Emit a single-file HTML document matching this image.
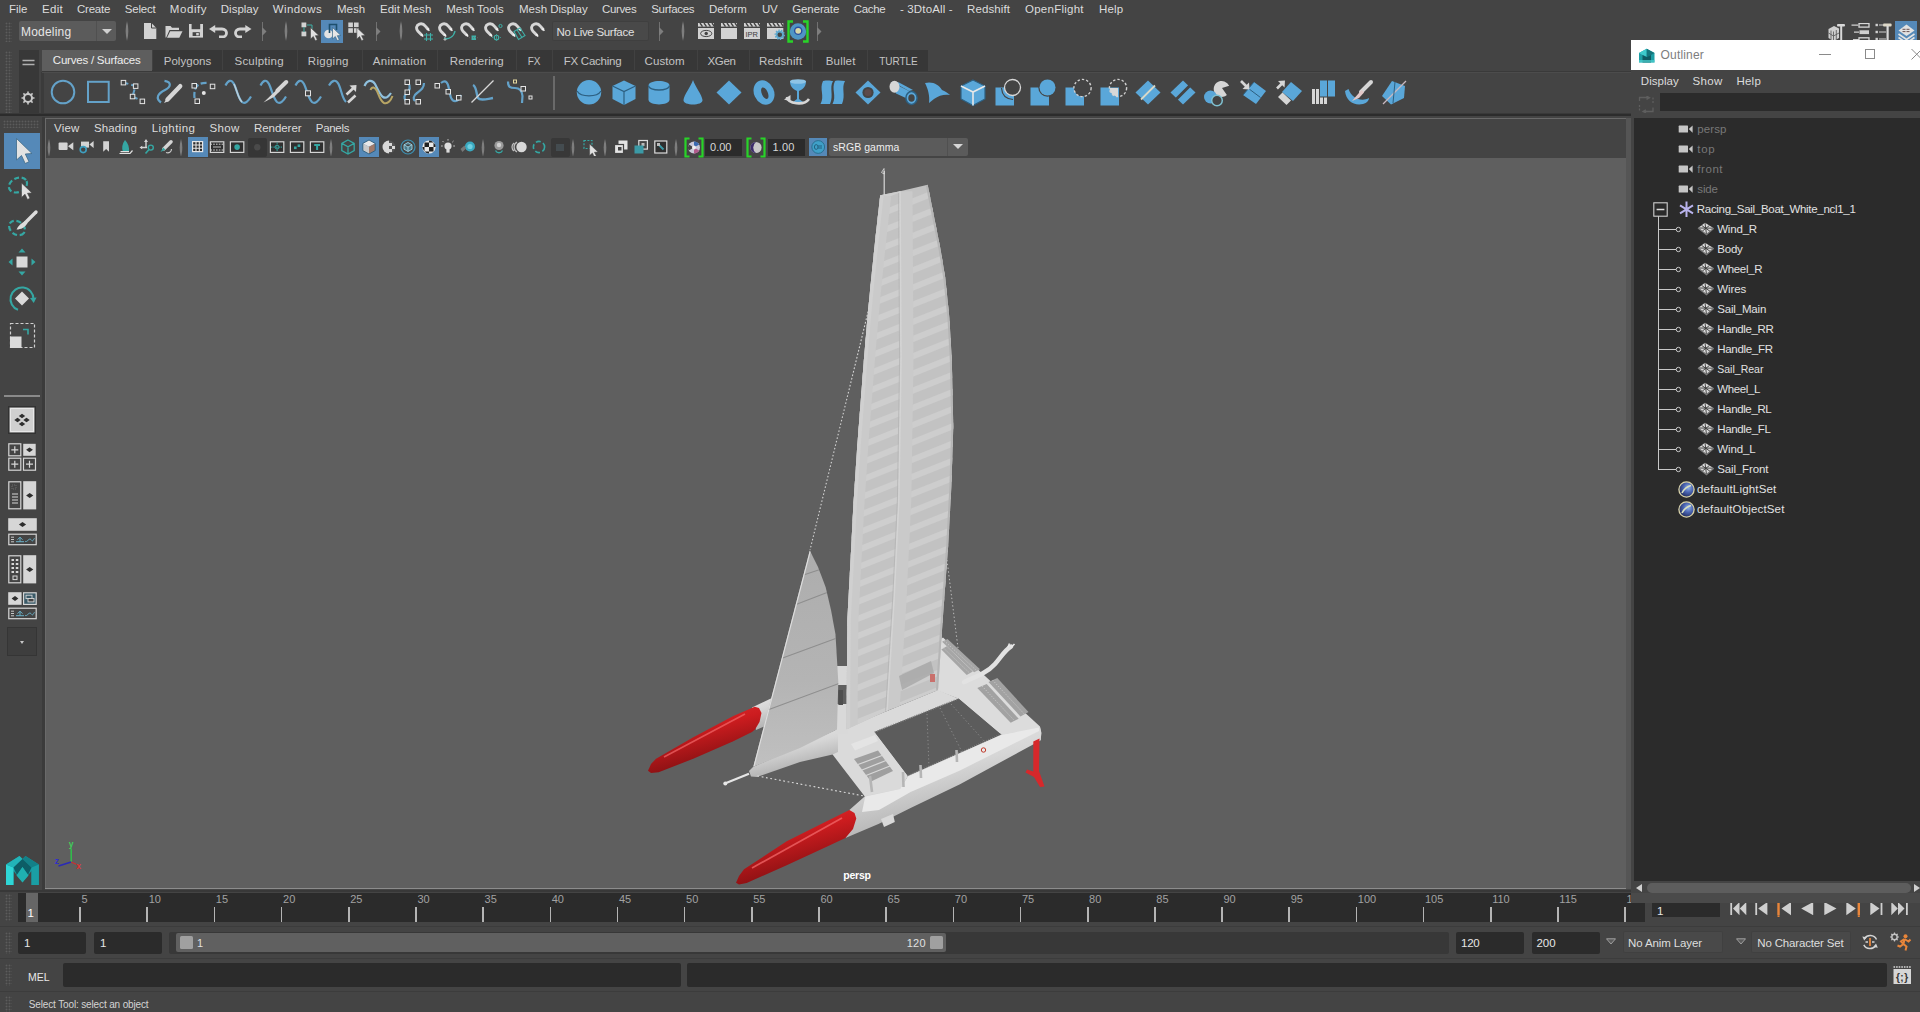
<!DOCTYPE html>
<html lang="en"><head><meta charset="utf-8"><title>Autodesk Maya</title>
<style>
html,body{margin:0;padding:0;}
body{width:1920px;height:1012px;overflow:hidden;background:#444444;position:relative;font-family:"Liberation Sans", sans-serif;}
body>div,body>span,body>svg{position:absolute;}
body>span{white-space:pre;line-height:16px;}
</style></head><body>
<span style="left:9px;top:0.52px;font-size:11.5px;color:#dcdcdc;letter-spacing:-0.083px;">File</span>
<span style="left:42px;top:0.52px;font-size:11.5px;color:#dcdcdc;letter-spacing:0.293px;">Edit</span>
<span style="left:77px;top:0.52px;font-size:11.5px;color:#dcdcdc;letter-spacing:-0.222px;">Create</span>
<span style="left:124.8px;top:0.52px;font-size:11.5px;color:#dcdcdc;letter-spacing:-0.211px;">Select</span>
<span style="left:169.8px;top:0.52px;font-size:11.5px;color:#dcdcdc;letter-spacing:0.587px;">Modify</span>
<span style="left:220.8px;top:0.52px;font-size:11.5px;color:#dcdcdc;letter-spacing:-0.003px;">Display</span>
<span style="left:272.8px;top:0.52px;font-size:11.5px;color:#dcdcdc;letter-spacing:0.392px;">Windows</span>
<span style="left:337px;top:0.52px;font-size:11.5px;color:#dcdcdc;letter-spacing:0.019px;">Mesh</span>
<span style="left:380px;top:0.52px;font-size:11.5px;color:#dcdcdc;letter-spacing:0.018px;">Edit Mesh</span>
<span style="left:446.2px;top:0.52px;font-size:11.5px;color:#dcdcdc;letter-spacing:-0.037px;">Mesh Tools</span>
<span style="left:519px;top:0.52px;font-size:11.5px;color:#dcdcdc;letter-spacing:-0.028px;">Mesh Display</span>
<span style="left:602px;top:0.52px;font-size:11.5px;color:#dcdcdc;letter-spacing:-0.356px;">Curves</span>
<span style="left:651.2px;top:0.52px;font-size:11.5px;color:#dcdcdc;letter-spacing:-0.286px;">Surfaces</span>
<span style="left:709px;top:0.52px;font-size:11.5px;color:#dcdcdc;letter-spacing:0.016px;">Deform</span>
<span style="left:762px;top:0.52px;font-size:11.5px;color:#dcdcdc;letter-spacing:-0.392px;">UV</span>
<span style="left:792.3px;top:0.52px;font-size:11.5px;color:#dcdcdc;letter-spacing:-0.132px;">Generate</span>
<span style="left:853.7px;top:0.52px;font-size:11.5px;color:#dcdcdc;letter-spacing:-0.290px;">Cache</span>
<span style="left:900px;top:0.52px;font-size:11.5px;color:#dcdcdc;letter-spacing:0.143px;">- 3DtoAll -</span>
<span style="left:967px;top:0.52px;font-size:11.5px;color:#dcdcdc;letter-spacing:0.102px;">Redshift</span>
<span style="left:1025px;top:0.52px;font-size:11.5px;color:#dcdcdc;letter-spacing:0.253px;">OpenFlight</span>
<span style="left:1099px;top:0.52px;font-size:11.5px;color:#dcdcdc;letter-spacing:0.161px;">Help</span>
<div style="left:5px;top:22px;width:7px;height:20px;background-image:radial-gradient(circle,#5c5c5c 0.8px,transparent 1.1px);background-size:3px 3px;"></div>
<div style="left:18.5px;top:21px;width:97px;height:19.5px;background:#5b5b5b;border-radius:2px;"></div>
<div style="left:96px;top:21px;width:1px;height:19.5px;background:#505050;"></div>
<span style="left:21px;top:23.84px;font-size:12px;color:#e6e6e6;letter-spacing:0.200px;">Modeling</span>
<div style="left:102px;top:29px;width:0;height:0;border-left:5px solid transparent;border-right:5px solid transparent;border-top:5px solid #d0d0d0;"></div>
<div style="left:551.5px;top:21px;width:97px;height:20px;background:#494949;border-radius:2px;box-shadow:inset 0 0 0 1px #3f3f3f;"></div>
<span style="left:556.5px;top:24.02px;font-size:11.5px;color:#e0e0e0;letter-spacing:-0.289px;">No Live Surface</span>
<div style="left:5px;top:51px;width:7px;height:62px;background-image:radial-gradient(circle,#5c5c5c 0.8px,transparent 1.1px);background-size:3px 3px;"></div>
<div style="left:18.5px;top:49.5px;width:20.3px;height:64px;background:#383838;"></div>
<div style="left:41.3px;top:72px;width:3px;height:41px;background:#3b3b3b;"></div>
<div style="left:42px;top:49.5px;width:885.5px;height:21px;background:#373737;"></div>
<div style="left:41.5px;top:49.5px;width:110.5px;height:21.5px;background:#5e5e5e;"></div>
<div style="left:152px;top:50px;width:1px;height:20px;background:#414141;"></div>
<div style="left:222px;top:50px;width:1px;height:20px;background:#414141;"></div>
<div style="left:297px;top:50px;width:1px;height:20px;background:#414141;"></div>
<div style="left:362px;top:50px;width:1px;height:20px;background:#414141;"></div>
<div style="left:437px;top:50px;width:1px;height:20px;background:#414141;"></div>
<div style="left:516px;top:50px;width:1px;height:20px;background:#414141;"></div>
<div style="left:552px;top:50px;width:1px;height:20px;background:#414141;"></div>
<div style="left:634px;top:50px;width:1px;height:20px;background:#414141;"></div>
<div style="left:697px;top:50px;width:1px;height:20px;background:#414141;"></div>
<div style="left:749px;top:50px;width:1px;height:20px;background:#414141;"></div>
<div style="left:812px;top:50px;width:1px;height:20px;background:#414141;"></div>
<div style="left:867px;top:50px;width:1px;height:20px;background:#414141;"></div>
<span style="left:52.8px;top:52.02px;font-size:11.5px;color:#eeeeee;letter-spacing:-0.218px;">Curves / Surfaces</span>
<span style="left:163.7px;top:53.02px;font-size:11.5px;color:#c4c4c4;letter-spacing:0.036px;">Polygons</span>
<span style="left:234.5px;top:53.02px;font-size:11.5px;color:#c4c4c4;letter-spacing:0.221px;">Sculpting</span>
<span style="left:307.8px;top:53.02px;font-size:11.5px;color:#c4c4c4;letter-spacing:0.286px;">Rigging</span>
<span style="left:372.8px;top:53.02px;font-size:11.5px;color:#c4c4c4;letter-spacing:0.262px;">Animation</span>
<span style="left:449.8px;top:53.02px;font-size:11.5px;color:#c4c4c4;letter-spacing:0.102px;">Rendering</span>
<span style="left:527.8px;top:53.53px;font-size:10px;color:#c4c4c4;letter-spacing:-0.041px;">FX</span>
<span style="left:563.7px;top:53.02px;font-size:11.5px;color:#c4c4c4;letter-spacing:-0.249px;">FX Caching</span>
<span style="left:644.5px;top:53.02px;font-size:11.5px;color:#c4c4c4;letter-spacing:0.096px;">Custom</span>
<span style="left:707.5px;top:53.02px;font-size:11.5px;color:#c4c4c4;letter-spacing:-0.355px;">XGen</span>
<span style="left:759px;top:53.02px;font-size:11.5px;color:#c4c4c4;letter-spacing:0.127px;">Redshift</span>
<span style="left:825.8px;top:53.02px;font-size:11.5px;color:#c4c4c4;letter-spacing:0.153px;">Bullet</span>
<span style="left:879.2px;top:53.53px;font-size:10px;color:#c4c4c4;letter-spacing:-0.036px;">TURTLE</span>
<div style="left:42px;top:70.5px;width:1589px;height:1px;background:#3a3a3a;"></div>
<div style="left:42px;top:71.5px;width:1589px;height:1px;background:#4c4c4c;"></div>
<div style="left:0px;top:112.8px;width:1631px;height:3.4px;background:#393939;"></div>
<div style="left:0px;top:113.8px;width:1631px;height:2px;background:#2c2c2c;"></div>
<div style="left:3px;top:120px;width:36px;height:8px;background-image:radial-gradient(circle,#5c5c5c 0.8px,transparent 1.1px);background-size:3px 3px;"></div>
<div style="left:4px;top:132.8px;width:36px;height:36px;background:#5589b8;"></div>
<div style="left:4px;top:395px;width:36px;height:1.5px;background:#8a8a8a;"></div>
<div style="left:41.5px;top:116.5px;width:3px;height:773px;background:#3b3b3b;"></div>
<div style="left:44.7px;top:117.8px;width:1586.3px;height:771.2px;background:#6a6a6a;"></div>
<div style="left:45.9px;top:119.2px;width:1585.1px;height:39px;background:#444444;"></div>
<div style="left:46px;top:158px;width:1579.5px;height:730px;background:#5f5f5f;"></div>
<div style="left:1625.5px;top:118px;width:5.5px;height:771px;background:#555555;"></div>
<div style="left:45px;top:888px;width:1581px;height:1.2px;background:#8c8c8c;"></div>
<span style="left:54px;top:119.72px;font-size:11.5px;color:#dcdcdc;letter-spacing:0.195px;">View</span>
<span style="left:94px;top:119.72px;font-size:11.5px;color:#dcdcdc;letter-spacing:0.112px;">Shading</span>
<span style="left:151.8px;top:119.72px;font-size:11.5px;color:#dcdcdc;letter-spacing:0.400px;">Lighting</span>
<span style="left:209.5px;top:119.72px;font-size:11.5px;color:#dcdcdc;letter-spacing:0.305px;">Show</span>
<span style="left:254px;top:119.72px;font-size:11.5px;color:#dcdcdc;letter-spacing:-0.057px;">Renderer</span>
<span style="left:315.8px;top:119.72px;font-size:11.5px;color:#dcdcdc;letter-spacing:-0.295px;">Panels</span>
<div style="left:705px;top:138.5px;width:37px;height:17px;background:#2b2b2b;"></div>
<span style="left:710px;top:139.49px;font-size:11px;color:#d8d8d8;letter-spacing:0.020px;">0.00</span>
<div style="left:768px;top:138.5px;width:37px;height:17px;background:#2b2b2b;"></div>
<span style="left:772.5px;top:139.49px;font-size:11px;color:#d8d8d8;letter-spacing:0.145px;">1.00</span>
<div style="left:808.5px;top:138px;width:18.5px;height:18px;background:#5589b8;"></div>
<div style="left:829px;top:138px;width:139px;height:17.5px;background:#5b5b5b;border-radius:2px;"></div>
<div style="left:947px;top:138px;width:1px;height:17.5px;background:#505050;"></div>
<span style="left:833px;top:139.36px;font-size:10.5px;color:#eeeeee;letter-spacing:0.056px;">sRGB gamma</span>
<div style="left:953px;top:144px;width:0;height:0;border-left:5px solid transparent;border-right:5px solid transparent;border-top:5px solid #d6d6d6;"></div>
<span style="left:843.3px;top:866.56px;font-size:10.5px;color:#ffffff;letter-spacing:-0.219px;font-weight:bold;">persp</span>
<div style="left:5px;top:894px;width:7px;height:27px;background-image:radial-gradient(circle,#5c5c5c 0.8px,transparent 1.1px);background-size:3px 3px;"></div>
<div style="left:0px;top:890px;width:1631px;height:1.5px;background:#383838;"></div>
<div style="left:18px;top:893px;width:1627px;height:29px;background:#2b2b2b;"></div>
<div style="left:26px;top:893px;width:11.5px;height:29px;background:#666666;"></div>
<span style="left:27.5px;top:905.02px;font-size:11.5px;color:#ffffff;">1</span>
<div style="left:79.3px;top:906.5px;width:1.6px;height:15.5px;background:#b4b4b4;"></div>
<span style="left:81.5px;top:891.49px;font-size:11px;color:#a2a2a2;">5</span>
<div style="left:146.475px;top:906.5px;width:1.6px;height:15.5px;background:#b4b4b4;"></div>
<span style="left:148.675px;top:891.49px;font-size:11px;color:#a2a2a2;">10</span>
<div style="left:213.65px;top:906.5px;width:1.6px;height:15.5px;background:#b4b4b4;"></div>
<span style="left:215.85px;top:891.49px;font-size:11px;color:#a2a2a2;">15</span>
<div style="left:280.825px;top:906.5px;width:1.6px;height:15.5px;background:#b4b4b4;"></div>
<span style="left:283.025px;top:891.49px;font-size:11px;color:#a2a2a2;">20</span>
<div style="left:348px;top:906.5px;width:1.6px;height:15.5px;background:#b4b4b4;"></div>
<span style="left:350.2px;top:891.49px;font-size:11px;color:#a2a2a2;">25</span>
<div style="left:415.175px;top:906.5px;width:1.6px;height:15.5px;background:#b4b4b4;"></div>
<span style="left:417.375px;top:891.49px;font-size:11px;color:#a2a2a2;">30</span>
<div style="left:482.35px;top:906.5px;width:1.6px;height:15.5px;background:#b4b4b4;"></div>
<span style="left:484.55px;top:891.49px;font-size:11px;color:#a2a2a2;">35</span>
<div style="left:549.525px;top:906.5px;width:1.6px;height:15.5px;background:#b4b4b4;"></div>
<span style="left:551.725px;top:891.49px;font-size:11px;color:#a2a2a2;">40</span>
<div style="left:616.7px;top:906.5px;width:1.6px;height:15.5px;background:#b4b4b4;"></div>
<span style="left:618.9px;top:891.49px;font-size:11px;color:#a2a2a2;">45</span>
<div style="left:683.875px;top:906.5px;width:1.6px;height:15.5px;background:#b4b4b4;"></div>
<span style="left:686.075px;top:891.49px;font-size:11px;color:#a2a2a2;">50</span>
<div style="left:751.05px;top:906.5px;width:1.6px;height:15.5px;background:#b4b4b4;"></div>
<span style="left:753.25px;top:891.49px;font-size:11px;color:#a2a2a2;">55</span>
<div style="left:818.225px;top:906.5px;width:1.6px;height:15.5px;background:#b4b4b4;"></div>
<span style="left:820.425px;top:891.49px;font-size:11px;color:#a2a2a2;">60</span>
<div style="left:885.4px;top:906.5px;width:1.6px;height:15.5px;background:#b4b4b4;"></div>
<span style="left:887.6px;top:891.49px;font-size:11px;color:#a2a2a2;">65</span>
<div style="left:952.575px;top:906.5px;width:1.6px;height:15.5px;background:#b4b4b4;"></div>
<span style="left:954.775px;top:891.49px;font-size:11px;color:#a2a2a2;">70</span>
<div style="left:1019.75px;top:906.5px;width:1.6px;height:15.5px;background:#b4b4b4;"></div>
<span style="left:1021.95px;top:891.49px;font-size:11px;color:#a2a2a2;">75</span>
<div style="left:1086.92px;top:906.5px;width:1.6px;height:15.5px;background:#b4b4b4;"></div>
<span style="left:1089.12px;top:891.49px;font-size:11px;color:#a2a2a2;">80</span>
<div style="left:1154.1px;top:906.5px;width:1.6px;height:15.5px;background:#b4b4b4;"></div>
<span style="left:1156.3px;top:891.49px;font-size:11px;color:#a2a2a2;">85</span>
<div style="left:1221.28px;top:906.5px;width:1.6px;height:15.5px;background:#b4b4b4;"></div>
<span style="left:1223.48px;top:891.49px;font-size:11px;color:#a2a2a2;">90</span>
<div style="left:1288.45px;top:906.5px;width:1.6px;height:15.5px;background:#b4b4b4;"></div>
<span style="left:1290.65px;top:891.49px;font-size:11px;color:#a2a2a2;">95</span>
<div style="left:1355.62px;top:906.5px;width:1.6px;height:15.5px;background:#b4b4b4;"></div>
<span style="left:1357.83px;top:891.49px;font-size:11px;color:#a2a2a2;">100</span>
<div style="left:1422.8px;top:906.5px;width:1.6px;height:15.5px;background:#b4b4b4;"></div>
<span style="left:1425px;top:891.49px;font-size:11px;color:#a2a2a2;">105</span>
<div style="left:1489.97px;top:906.5px;width:1.6px;height:15.5px;background:#b4b4b4;"></div>
<span style="left:1492.17px;top:891.49px;font-size:11px;color:#a2a2a2;">110</span>
<div style="left:1557.15px;top:906.5px;width:1.6px;height:15.5px;background:#b4b4b4;"></div>
<span style="left:1559.35px;top:891.49px;font-size:11px;color:#a2a2a2;">115</span>
<div style="left:1624.33px;top:906.5px;width:1.6px;height:15.5px;background:#b4b4b4;"></div>
<span style="left:1626.53px;top:891.49px;font-size:11px;color:#a2a2a2;">120</span>
<div style="left:0px;top:926px;width:1920px;height:1px;background:#3c3c3c;"></div>
<div style="left:0px;top:958.3px;width:1920px;height:1px;background:#3c3c3c;"></div>
<div style="left:0px;top:991.3px;width:1920px;height:1px;background:#3c3c3c;"></div>
<div style="left:1652px;top:903px;width:68px;height:14px;background:#2b2b2b;"></div>
<span style="left:1657px;top:902.52px;font-size:11.5px;color:#e6e6e6;">1</span>
<div style="left:5px;top:932px;width:7px;height:22px;background-image:radial-gradient(circle,#5c5c5c 0.8px,transparent 1.1px);background-size:3px 3px;"></div>
<div style="left:18.3px;top:931.5px;width:67.7px;height:22px;background:#2b2b2b;border-radius:2px;"></div>
<span style="left:24px;top:935.02px;font-size:11.5px;color:#e6e6e6;">1</span>
<div style="left:94px;top:931.5px;width:67.7px;height:22px;background:#2b2b2b;border-radius:2px;"></div>
<span style="left:100px;top:935.02px;font-size:11.5px;color:#e6e6e6;">1</span>
<div style="left:169px;top:931.5px;width:1279.5px;height:22px;background:#383838;border-radius:2px;"></div>
<div style="left:176px;top:933.3px;width:770px;height:18.4px;background:#606060;border-radius:2px;"></div>
<div style="left:180px;top:936px;width:13px;height:13px;background:#a0a0a0;border-radius:1.5px;"></div>
<div style="left:929.5px;top:936px;width:13px;height:13px;background:#a0a0a0;border-radius:1.5px;"></div>
<span style="left:197px;top:935.19px;font-size:11px;color:#e0e0e0;">1</span>
<span style="left:906.7px;top:935.19px;font-size:11px;color:#e0e0e0;letter-spacing:0.314px;">120</span>
<div style="left:1456px;top:931.5px;width:67.7px;height:22px;background:#2b2b2b;border-radius:2px;"></div>
<span style="left:1461px;top:935.02px;font-size:11.5px;color:#e6e6e6;letter-spacing:-0.229px;">120</span>
<div style="left:1532px;top:931.5px;width:68px;height:22px;background:#2b2b2b;border-radius:2px;"></div>
<span style="left:1536.5px;top:935.02px;font-size:11.5px;color:#e6e6e6;letter-spacing:-0.062px;">200</span>
<div style="left:1623.3px;top:931px;width:100px;height:22.3px;background:#494949;border-radius:2px;box-shadow:inset 0 0 0 1px #404040;"></div>
<span style="left:1628px;top:935.02px;font-size:11.5px;color:#dedede;letter-spacing:-0.111px;">No Anim Layer</span>
<div style="left:1751px;top:931px;width:100px;height:22.3px;background:#494949;border-radius:2px;box-shadow:inset 0 0 0 1px #404040;"></div>
<span style="left:1757.3px;top:935.02px;font-size:11.5px;color:#dedede;letter-spacing:-0.166px;">No Character Set</span>
<div style="left:5px;top:964px;width:7px;height:22px;background-image:radial-gradient(circle,#5c5c5c 0.8px,transparent 1.1px);background-size:3px 3px;"></div>
<span style="left:28px;top:968.66px;font-size:10.5px;color:#e8e8e8;letter-spacing:-0.031px;">MEL</span>
<div style="left:62.7px;top:963.3px;width:618px;height:23.4px;background:#2b2b2b;border-radius:2px;"></div>
<div style="left:686.7px;top:963.3px;width:1200px;height:23.4px;background:#2b2b2b;border-radius:2px;"></div>
<div style="left:5px;top:996px;width:7px;height:16px;background-image:radial-gradient(circle,#5c5c5c 0.8px,transparent 1.1px);background-size:3px 3px;"></div>
<span style="left:28.8px;top:997.13px;font-size:10px;color:#d4d4d4;letter-spacing:-0.141px;">Select Tool: select an object</span>
<svg style="left:46px;top:158px" width="1579.5" height="730" viewBox="46 158 1579.5 730">
<defs>
<linearGradient id="gRed" x1="0" y1="0" x2="0.45" y2="1"><stop offset="0" stop-color="#e23436"/><stop offset="0.45" stop-color="#cc1c1f"/><stop offset="1" stop-color="#7a0e10"/></linearGradient>
<linearGradient id="gWht" x1="0" y1="0" x2="0.45" y2="1"><stop offset="0" stop-color="#efefef"/><stop offset="0.5" stop-color="#d6d6d6"/><stop offset="1" stop-color="#a9a9a9"/></linearGradient>
<linearGradient id="gSailL" x1="0" y1="0" x2="1" y2="0"><stop offset="0" stop-color="#d4d4d4"/><stop offset="0.35" stop-color="#cdcdcd"/><stop offset="1" stop-color="#c8c8c8"/></linearGradient>
<linearGradient id="gSailR" x1="0" y1="0" x2="1" y2="0"><stop offset="0" stop-color="#c5c5c5"/><stop offset="0.5" stop-color="#cbcbcb"/><stop offset="1" stop-color="#c2c2c2"/></linearGradient>
<linearGradient id="gJib" x1="0" y1="0" x2="0" y2="1"><stop offset="0" stop-color="#adadad"/><stop offset="0.6" stop-color="#b4b4b4"/><stop offset="1" stop-color="#c0c0c0"/></linearGradient>
<clipPath id="cL"><polygon points="880.2,195.2 900.0,191.2 901.0,360.0 898.8,500.0 894.0,600.0 887.0,710.7 846.7,729.3 846.7,700.0 847.4,618.6 851.3,545.4 853.3,505.9 857.2,446.6 863.9,359.6 867.4,318.0 870.4,286.5 875.3,239.0"/></clipPath>
<clipPath id="cR"><polygon points="900.0,191.2 927.7,184.7 934.6,219.3 940.5,248.9 945.4,278.6 949.4,318.0 951.8,359.6 953.3,426.8 951.4,486.0 948.2,545.4 942.7,620.0 938.0,690.0 887.0,710.7 894.0,600.0 898.8,500.0 901.0,360.0"/></clipPath>
<clipPath id="cJ"><polygon points="809.8,550.6 818.0,567.0 825.6,587.0 831.0,610.0 835.5,634.4 838.3,681.9 837.0,729.5 800.0,748.0 773.3,758.7 753.3,766.7"/></clipPath>
</defs>
<polygon points="752.0,707.5 774.0,697.0 790.0,690.0 790.0,716.0 772.0,723.0 756.0,730.0" fill="url(#gWht)"/>
<polygon points="648.0,770.7 651.0,764.0 656.0,758.7 693.3,737.3 733.3,716.0 754.7,706.7 759.0,708.0 761.5,713.0 759.5,722.0 755.0,729.5 752.0,732.0 733.3,741.3 693.3,758.7 658.7,772.3 651.0,773.0" fill="url(#gRed)"/>
<path d="M664 757 L745 714" stroke="#f2686a" stroke-width="1.6" fill="none" opacity="0.7"/>
<polygon points="936.0,642.0 943.0,637.5 1040.0,726.5 1041.0,733.0 1040.5,740.0 1001.0,748.0 1001.3,734.7 958.7,698.7 936.0,690.0" fill="#dcdcdc"/>
<polygon points="1001.3,735.0 1040.0,727.5 1040.5,740.0 1003.0,749.0" fill="#c2c2c2"/>
<polygon points="942.1,641.8 947.5,638.9 980.0,669.3 974.1,672.3" fill="#a6a6a6"/>
<polygon points="941.3,649.5 946.7,646.3 972.8,671.5 966.7,675.0" fill="#a6a6a6"/>
<polygon points="988.5,681.9 997.3,678.1 1028.5,712.0 1020.5,716.5" fill="#a2a2a2"/>
<polygon points="977.3,688.0 986.7,684.0 1018.7,718.7 1010.7,722.7" fill="#a2a2a2"/>
<path d="M944 640.5 L977 671 M943.5 648 L969.5 673 M992.5 680 L1024.5 714.3 M982 686 L1014.5 720.7" stroke="#c9c9c9" stroke-width="0.9" stroke-dasharray="1.2 1.6"/>
<polygon points="826.0,738.0 846.0,728.0 887.0,711.0 938.0,690.0 958.7,698.7 874.7,732.0 908.0,776.0 900.0,790.0 865.2,797.0 832.6,754.6" fill="#dadada"/>
<polygon points="854.0,759.0 878.0,750.5 893.0,771.0 871.0,781.5" fill="#9f9f9f"/>
<path d="M858 764.5 L882 755.5 M862 770 L886 760.5 M866 775.5 L890 766" stroke="#d8d8d8" stroke-width="1.3"/>
<polygon points="851.0,744.0 875.0,735.0 878.0,741.0 855.0,750.5" fill="#e4e4e4"/>
<polygon points="749.0,771.0 753.0,767.0 838.0,729.0 838.0,752.0 832.6,754.6 800.0,762.0 757.0,777.0 751.0,776.5" fill="url(#gWht)"/>
<path d="M725.5 783.3 L749 773.8" stroke="#e6e6e6" stroke-width="2.2"/>
<circle cx="725.3" cy="783.5" r="2" fill="#e8e8e8"/>
<polygon points="874.7,732.0 958.7,698.7 1001.3,734.7 908.0,776.0" fill="#5c5c5c"/>
<path d="M908 776 L1001.3 734.7" stroke="#7a7a7a" stroke-width="2.5" stroke-dasharray="1 1.2"/>
<path d="M874.7 732 L958.7 698.7" stroke="#8a8a8a" stroke-width="1.5" stroke-dasharray="1 1.5"/>
<path d="M927 714 L929 768 M940 708 L962 752 M951 704 L985 742" stroke="#8c8c8c" stroke-width="1" stroke-dasharray="1.2 2.5" fill="none"/>
<polygon points="849.4,809.9 865.2,796.0 900.0,789.0 908.0,776.0 1001.3,734.7 1040.0,727.0 1041.5,733.0 1040.5,740.5 960.0,784.2 910.6,807.9 879.0,823.7 845.4,838.0" fill="url(#gWht)"/>
<polygon points="865.2,796.5 900.0,789.0 908.0,776.5 1001.3,735.0 1039.0,727.5 1039.0,731.0 960.0,770.4 910.6,792.0 879.0,809.9 862.0,812.0" fill="#e9e9e9"/>
<polygon points="736.0,882.7 739.0,876.0 744.0,869.3 786.7,841.3 826.7,821.3 849.4,809.9 854.5,813.0 856.3,818.5 853.0,829.0 845.4,838.0 826.7,846.7 786.7,865.3 746.7,883.0 739.0,884.5" fill="url(#gRed)"/>
<path d="M752 868 L842 818" stroke="#f2686a" stroke-width="1.8" fill="none" opacity="0.75"/>
<polygon points="881.0,819.0 893.0,814.0 894.8,822.0 884.0,827.0" fill="#d9d9d9"/>
<path d="M870 776 L872 792 M903 772 L903.5 787 M920.5 765 L921 778 M956.5 750 L957 762" stroke="#b5b5b5" stroke-width="2.6"/>
<circle cx="983.5" cy="750" r="2.2" fill="none" stroke="#c0392b" stroke-width="1"/>
<polygon points="1033.3,741.5 1039.5,738.5 1039.0,771.0 1044.5,786.5 1040.0,787.0 1034.0,777.0 1025.5,772.5 1027.0,769.5 1033.3,771.5" fill="#d6282b"/>
<path d="M964 682 C978 676 988 672 995 664 C1001 657 1005 650 1011 646.5" stroke="#e2e2e2" stroke-width="4.5" fill="none" stroke-linecap="round"/>
<path d="M1008 647 L1009.5 643.5 M1011.5 647 L1014.5 644" stroke="#e8e8e8" stroke-width="1.6" fill="none"/>
<rect x="835" y="666" width="13" height="19" fill="#d8d8d8"/><rect x="835" y="704" width="13" height="30" fill="#d9d9d9"/><rect x="838.4" y="690" width="4.6" height="15" fill="#4e4e4e"/>
<polygon points="809.8,550.6 818.0,567.0 825.6,587.0 831.0,610.0 835.5,634.4 838.3,681.9 837.0,729.5 800.0,748.0 773.3,758.7 753.3,766.7" fill="url(#gJib)"/>
<g clip-path="url(#cJ)">
<path d="M802 575.5 L823 568.5 M794 605.2 L831 591 M782 658.3 L837 638 M768.3 709.8 L839 683.5" stroke="#8e8e8e" stroke-width="1.1" fill="none"/>
<path d="M809.8 550.6 L753.3 766.7" stroke="#dedede" stroke-width="2.2" fill="none"/>
</g>
<polygon points="880.2,195.2 900.0,191.2 901.0,360.0 898.8,500.0 894.0,600.0 887.0,710.7 846.7,729.3 846.7,700.0 847.4,618.6 851.3,545.4 853.3,505.9 857.2,446.6 863.9,359.6 867.4,318.0 870.4,286.5 875.3,239.0" fill="#c3c3c3"/>
<g clip-path="url(#cL)">
<path d="M838 214.0 L906 186.8" stroke="#cecece" stroke-width="6"/>
<path d="M838 231.2 L906 204.0" stroke="#cecece" stroke-width="6"/>
<path d="M838 248.4 L906 221.2" stroke="#cecece" stroke-width="6"/>
<path d="M838 265.6 L906 238.4" stroke="#cecece" stroke-width="6"/>
<path d="M838 282.8 L906 255.6" stroke="#cecece" stroke-width="6"/>
<path d="M838 300.0 L906 272.8" stroke="#cecece" stroke-width="6"/>
<path d="M838 317.2 L906 290.0" stroke="#cecece" stroke-width="6"/>
<path d="M838 334.4 L906 307.2" stroke="#cecece" stroke-width="6"/>
<path d="M838 351.6 L906 324.4" stroke="#cecece" stroke-width="6"/>
<path d="M838 368.8 L906 341.6" stroke="#cecece" stroke-width="6"/>
<path d="M838 386.0 L906 358.8" stroke="#cecece" stroke-width="6"/>
<path d="M838 403.2 L906 376.0" stroke="#cecece" stroke-width="6"/>
<path d="M838 420.4 L906 393.2" stroke="#cecece" stroke-width="6"/>
<path d="M838 437.6 L906 410.4" stroke="#cecece" stroke-width="6"/>
<path d="M838 454.8 L906 427.6" stroke="#cecece" stroke-width="6"/>
<path d="M838 472.0 L906 444.8" stroke="#cecece" stroke-width="6"/>
<path d="M838 489.2 L906 462.0" stroke="#cecece" stroke-width="6"/>
<path d="M838 506.4 L906 479.2" stroke="#cecece" stroke-width="6"/>
<path d="M838 523.6 L906 496.4" stroke="#cecece" stroke-width="6"/>
<path d="M838 540.8 L906 513.6" stroke="#cecece" stroke-width="6"/>
<path d="M838 558.0 L906 530.8" stroke="#cecece" stroke-width="6"/>
<path d="M838 575.2 L906 548.0" stroke="#cecece" stroke-width="6"/>
<path d="M838 592.4 L906 565.2" stroke="#cecece" stroke-width="6"/>
<path d="M838 609.6 L906 582.4" stroke="#cecece" stroke-width="6"/>
<path d="M838 626.8 L906 599.6" stroke="#cecece" stroke-width="6"/>
<path d="M838 644.0 L906 616.8" stroke="#cecece" stroke-width="6"/>
<path d="M838 661.2 L906 634.0" stroke="#cecece" stroke-width="6"/>
<path d="M838 678.4 L906 651.2" stroke="#cecece" stroke-width="6"/>
<path d="M838 695.6 L906 668.4" stroke="#cecece" stroke-width="6"/>
<path d="M838 712.8 L906 685.6" stroke="#cecece" stroke-width="6"/>
<path d="M838 730.0 L906 702.8" stroke="#cecece" stroke-width="6"/>
<path d="M838 747.2 L906 720.0" stroke="#cecece" stroke-width="6"/>
<path d="M838 764.4 L906 737.2" stroke="#cecece" stroke-width="6"/>
<polyline points="846.7,729.3 846.7,700.0 847.4,618.6 851.3,545.4 853.3,505.9 857.2,446.6 863.9,359.6 867.4,318.0 870.4,286.5 875.3,239.0 880.2,195.2" fill="none" stroke="#cacaca" stroke-width="22" stroke-linejoin="round"/>
<polyline points="846.7,729.3 846.7,700.0 847.4,618.6 851.3,545.4 853.3,505.9 857.2,446.6 863.9,359.6 867.4,318.0 870.4,286.5 875.3,239.0 880.2,195.2" fill="none" stroke="#d0d0d0" stroke-width="7" stroke-linejoin="round"/>
</g>
<polygon points="900.0,191.2 927.7,184.7 934.6,219.3 940.5,248.9 945.4,278.6 949.4,318.0 951.8,359.6 953.3,426.8 951.4,486.0 948.2,545.4 942.7,620.0 938.0,690.0 887.0,710.7 894.0,600.0 898.8,500.0 901.0,360.0" fill="#c2c2c2"/>
<g clip-path="url(#cR)">
<path d="M894 209.0 L960 182.6" stroke="#cdcdcd" stroke-width="6"/>
<path d="M894 226.2 L960 199.8" stroke="#cdcdcd" stroke-width="6"/>
<path d="M894 243.4 L960 217.0" stroke="#cdcdcd" stroke-width="6"/>
<path d="M894 260.6 L960 234.2" stroke="#cdcdcd" stroke-width="6"/>
<path d="M894 277.8 L960 251.4" stroke="#cdcdcd" stroke-width="6"/>
<path d="M894 295.0 L960 268.6" stroke="#cdcdcd" stroke-width="6"/>
<path d="M894 312.2 L960 285.8" stroke="#cdcdcd" stroke-width="6"/>
<path d="M894 329.4 L960 303.0" stroke="#cdcdcd" stroke-width="6"/>
<path d="M894 346.6 L960 320.2" stroke="#cdcdcd" stroke-width="6"/>
<path d="M894 363.8 L960 337.4" stroke="#cdcdcd" stroke-width="6"/>
<path d="M894 381.0 L960 354.6" stroke="#cdcdcd" stroke-width="6"/>
<path d="M894 398.2 L960 371.8" stroke="#cdcdcd" stroke-width="6"/>
<path d="M894 415.4 L960 389.0" stroke="#cdcdcd" stroke-width="6"/>
<path d="M894 432.6 L960 406.2" stroke="#cdcdcd" stroke-width="6"/>
<path d="M894 449.8 L960 423.4" stroke="#cdcdcd" stroke-width="6"/>
<path d="M894 467.0 L960 440.6" stroke="#cdcdcd" stroke-width="6"/>
<path d="M894 484.2 L960 457.8" stroke="#cdcdcd" stroke-width="6"/>
<path d="M894 501.4 L960 475.0" stroke="#cdcdcd" stroke-width="6"/>
<path d="M894 518.6 L960 492.2" stroke="#cdcdcd" stroke-width="6"/>
<path d="M894 535.8 L960 509.4" stroke="#cdcdcd" stroke-width="6"/>
<path d="M894 553.0 L960 526.6" stroke="#cdcdcd" stroke-width="6"/>
<path d="M894 570.2 L960 543.8" stroke="#cdcdcd" stroke-width="6"/>
<path d="M894 587.4 L960 561.0" stroke="#cdcdcd" stroke-width="6"/>
<path d="M894 604.6 L960 578.2" stroke="#cdcdcd" stroke-width="6"/>
<path d="M894 621.8 L960 595.4" stroke="#cdcdcd" stroke-width="6"/>
<path d="M894 639.0 L960 612.6" stroke="#cdcdcd" stroke-width="6"/>
<path d="M894 656.2 L960 629.8" stroke="#cdcdcd" stroke-width="6"/>
<path d="M894 673.4 L960 647.0" stroke="#cdcdcd" stroke-width="6"/>
<path d="M894 690.6 L960 664.2" stroke="#cdcdcd" stroke-width="6"/>
<path d="M894 707.8 L960 681.4" stroke="#cdcdcd" stroke-width="6"/>
<path d="M894 725.0 L960 698.6" stroke="#cdcdcd" stroke-width="6"/>
<path d="M894 742.2 L960 715.8" stroke="#cdcdcd" stroke-width="6"/>
<path d="M900 191.2 L901 360 L898.8 500 L894 600 L887 710.7" fill="none" stroke="#cacaca" stroke-width="25" stroke-linejoin="round"/>
<polyline points="927.7,184.7 934.6,219.3 940.5,248.9 945.4,278.6 949.4,318.0 951.8,359.6 953.3,426.8 951.4,486.0 948.2,545.4 942.7,620.0 938.0,690.0" fill="none" stroke="#b6b6b6" stroke-width="4" stroke-linejoin="round"/>
<polygon points="899.0,676.0 931.0,661.0 934.0,673.0 902.0,690.0" fill="#a9a9a9" opacity="0.85"/>
<rect x="930" y="674" width="5" height="8" fill="#c9706c"/>
</g>
<path d="M900 191.2 L901 360 L898.8 500 L894 600 L887 710.7" stroke="#d4d4d4" stroke-width="1.6" fill="none"/>
<path d="M898.6 193 L899.6 360 L897.4 500 L892.6 600 L885.6 710.7" stroke="#b4b4b4" stroke-width="0.8" fill="none"/>
<path d="M884.2 171 L884.2 195" stroke="#d8d8d8" stroke-width="1.2"/>
<path d="M881.5 172.5 L884 168.5 L884.2 174 Z" stroke="#e0e0e0" stroke-width="0.8" fill="none"/>
<path d="M869 308 L810 550" stroke="#d2d2d2" stroke-width="1.1" stroke-dasharray="1.6 2" fill="none"/>
<path d="M947 560 L958 648" stroke="#bdbdbd" stroke-width="1" stroke-dasharray="1.4 2.4" fill="none"/>
<path d="M757.3 776 L864 796" stroke="#dcdcdc" stroke-width="1.1" stroke-dasharray="1.8 2.6" fill="none"/>
</svg>
<svg style="left:47px;top:77px" width="32" height="32" viewBox="0 0 32 32"><circle cx="16" cy="15" r="11.3" fill="none" stroke="#64a2c9" stroke-width="2"/></svg>
<svg style="left:82px;top:77px" width="32" height="32" viewBox="0 0 32 32"><rect x="6" y="4.8" width="20.7" height="20.2" fill="none" stroke="#64a2c9" stroke-width="2"/></svg>
<svg style="left:117px;top:77px" width="32" height="32" viewBox="0 0 32 32"><path d="M6.5 5.5 L18.5 9 L15.5 19.5 L25.3 24.3" fill="none" stroke="#64a2c9" stroke-width="2" stroke-dasharray="5 3"/><rect x="4.2" y="3.4" width="4.5" height="4.5" fill="#444" stroke="#e4e4e4" stroke-width="1"/><rect x="16.4" y="6.9" width="4.5" height="4.5" fill="#444" stroke="#e4e4e4" stroke-width="1"/><rect x="13.3" y="17.3" width="4.5" height="4.5" fill="#444" stroke="#e4e4e4" stroke-width="1"/><rect x="23.1" y="22.1" width="4.5" height="4.5" fill="#444" stroke="#e4e4e4" stroke-width="1"/></svg>
<svg style="left:152px;top:77px" width="32" height="32" viewBox="0 0 32 32"><path d="M12.5 3.8 C20 5 19 10 13 13 C6 16.5 3 21 9 25.5" fill="none" stroke="#64a2c9" stroke-width="2.2"/><path d="M28.2 9.2 L15.5 22.5" stroke="#d6d6d6" stroke-width="4.4" stroke-linecap="round"/><path d="M14.8 21 L12 26 L17 24 Z" fill="#d6d6d6"/></svg>
<svg style="left:187px;top:77px" width="32" height="32" viewBox="0 0 32 32"><path d="M7.5 21 C6.5 10 10 5 22 6" fill="none" stroke="#64a2c9" stroke-width="2.2" stroke-dasharray="6 2.5"/><rect x="5" y="6.5" width="4.5" height="4.5" fill="#444" stroke="#e4e4e4" stroke-width="1"/><rect x="23.3" y="7.2" width="4.5" height="4.5" fill="#444" stroke="#e4e4e4" stroke-width="1"/><rect x="8" y="22" width="4.5" height="4.5" fill="#444" stroke="#e4e4e4" stroke-width="1"/><circle cx="16.8" cy="16" r="2" fill="#e4e4e4"/></svg>
<svg style="left:222px;top:77px" width="32" height="32" viewBox="0 0 32 32"><path d="M3.5 8.5 C6 3 9.5 2 12 7 C15 13 16 21 20 25 C23 27.5 26.5 24 29 19.5" fill="none" stroke="#64a2c9" stroke-width="2.2"/><path d="M12 7 C15 13 16 21 20 25" fill="none" stroke="#b8cdd9" stroke-width="1.6"/></svg>
<svg style="left:257px;top:77px" width="32" height="32" viewBox="0 0 32 32"><path d="M3.5 8.5 C6 3 9.5 2 12 7 C15 13 16 21 20 25 C23 27.5 26.5 24 29 19.5" fill="none" stroke="#64a2c9" stroke-width="2.2"/><path d="M29.2 5 L20.5 13.5" stroke="#d6d6d6" stroke-width="4" stroke-linecap="round"/><path d="M21.5 11 L6.5 25.5 L17 20 L23 14 Z" fill="#d6d6d6"/></svg>
<svg style="left:292px;top:77px" width="32" height="32" viewBox="0 0 32 32"><path d="M3.5 8.5 C6 3 9.5 2 12 7 C15 13 16 21 20 25 C23 27.5 26.5 24 29 19.5" fill="none" stroke="#64a2c9" stroke-width="2.2"/><rect x="13.5" y="13.8" width="5" height="5" fill="#444" stroke="#e4e4e4" stroke-width="1"/></svg>
<svg style="left:327px;top:77px" width="32" height="32" viewBox="0 0 32 32"><path d="M2 8.5 C5 3 9 2 11.5 7 C14.5 13 15 21 19 25" fill="none" stroke="#64a2c9" stroke-width="2.2"/><path d="M19.5 17.5 L27.5 10 M21 25.5 L28.5 18.5" stroke="#d6d6d6" stroke-width="2.6"/><path d="M22.5 8.5 L29.5 8 L29 15 Z" fill="#d6d6d6"/></svg>
<svg style="left:362px;top:77px" width="32" height="32" viewBox="0 0 32 32"><path d="M2.5 9 C5 3 10 2 13 7 C16 13 18 18 21 20 C24 22 27 19 29 16" fill="none" stroke="#8fc0dd" stroke-width="2.2"/><path d="M8.5 13 C10 9 13 10 15 14 C17 18 18 24 22 26 C26 27.5 29 23 30.5 19" fill="none" stroke="#b7a565" stroke-width="2"/></svg>
<svg style="left:397px;top:77px" width="32" height="32" viewBox="0 0 32 32"><path d="M11 5 C14 10 13 14 9 17 C6 20 8 23 10 25" fill="none" stroke="#64a2c9" stroke-width="2.2"/><path d="M27 6 C27 11 24 13 20 16 C16 19 16 22 18 24" fill="none" stroke="#64a2c9" stroke-width="2.2"/><rect x="8" y="3" width="4.5" height="4.5" fill="#444" stroke="#e4e4e4" stroke-width="1"/><rect x="19" y="3" width="4.5" height="4.5" fill="#444" stroke="#e4e4e4" stroke-width="1"/><rect x="8" y="13" width="4.5" height="4.5" fill="#444" stroke="#e4e4e4" stroke-width="1"/><rect x="8" y="22.5" width="4.5" height="4.5" fill="#444" stroke="#e4e4e4" stroke-width="1"/><rect x="19" y="22.5" width="4.5" height="4.5" fill="#444" stroke="#e4e4e4" stroke-width="1"/></svg>
<svg style="left:432px;top:77px" width="32" height="32" viewBox="0 0 32 32"><path d="M9 6 C14 2 16 6 17 12 C18 18 19 25 24 24 C27 23.5 28 20 29 18" fill="none" stroke="#64a2c9" stroke-width="2.2"/><rect x="3" y="6.5" width="4.5" height="4.5" fill="#444" stroke="#e4e4e4" stroke-width="1"/><rect x="14" y="12.5" width="4.5" height="4.5" fill="#444" stroke="#e4e4e4" stroke-width="1"/><rect x="24.5" y="18.5" width="4.5" height="4.5" fill="#444" stroke="#e4e4e4" stroke-width="1"/></svg>
<svg style="left:467px;top:77px" width="32" height="32" viewBox="0 0 32 32"><path d="M6 8 C10 10 9 17 11 21 C13 24 20 22 26 21" fill="none" stroke="#64a2c9" stroke-width="2.4"/><path d="M4.5 25.5 L26.5 3.5" stroke="#d8d8d8" stroke-width="1.3"/></svg>
<svg style="left:502px;top:77px" width="32" height="32" viewBox="0 0 32 32"><path d="M6 4.5 C6 10 8 11 13 11 C18 11 20 14 20.5 19 L20 26" fill="none" stroke="#64a2c9" stroke-width="2.2"/><rect x="11.5" y="3" width="3" height="3" fill="#444" stroke="#e6d9a0" stroke-width="1"/><rect x="19" y="9.5" width="4.5" height="4.5" fill="#444" stroke="#e4e4e4" stroke-width="1"/><rect x="27" y="19" width="3" height="3" fill="#444" stroke="#e4e4e4" stroke-width="1"/></svg>
<div style="left:553px;top:75.5px;width:1.6px;height:34px;background:#6a6a6a;"></div>
<svg style="left:573px;top:77px" width="32" height="32" viewBox="0 0 32 32"><circle cx="16" cy="15.3" r="12.2" fill="#5aa7d9"/><path d="M4 14 C8 20.5 24 20.5 28 14" fill="none" stroke="#2d5f80" stroke-width="1.3"/></svg>
<svg style="left:608px;top:77px" width="32" height="32" viewBox="0 0 32 32"><path d="M16 3.5 L27.5 9 L27.5 22 L16 28 L4.5 22 L4.5 9 Z" fill="#5aa7d9"/><path d="M4.5 9 L16 14.5 L27.5 9 M16 14.5 L16 28" fill="none" stroke="#2d5f80" stroke-width="1.2"/></svg>
<svg style="left:643px;top:77px" width="32" height="32" viewBox="0 0 32 32"><path d="M5.5 8.5 C5.5 2.5 26.5 2.5 26.5 8.5 L26.5 22.5 C26.5 29 5.5 29 5.5 22.5 Z" fill="#5aa7d9"/><path d="M5.5 8.5 C5.5 14.5 26.5 14.5 26.5 8.5" fill="none" stroke="#2d5f80" stroke-width="1.3"/></svg>
<svg style="left:677px;top:77px" width="32" height="32" viewBox="0 0 32 32"><path d="M16 3 C18 9 25 18 25.5 23 C26 29 6 29 6.5 23 C7 18 14 9 16 3 Z" fill="#5aa7d9"/></svg>
<svg style="left:713px;top:77px" width="32" height="32" viewBox="0 0 32 32"><path d="M16 3.5 L28.5 15.5 L16 27.5 L3.5 15.5 Z" fill="#5aa7d9"/></svg>
<svg style="left:748px;top:77px" width="32" height="32" viewBox="0 0 32 32"><ellipse cx="16" cy="15.5" rx="10" ry="12.6" transform="rotate(-24 16 15.5)" fill="#5aa7d9"/><ellipse cx="16.8" cy="16.2" rx="3" ry="6.2" transform="rotate(-24 16.8 16.2)" fill="#444"/></svg>
<svg style="left:782px;top:77px" width="32" height="32" viewBox="0 0 32 32"><path d="M8 4 C8 11 13 13 15 14 L15 22 L11 25 L21 25 L17 22 L17 14 C19 13 24 11 24 4 Z" fill="#5aa7d9"/><ellipse cx="16" cy="4.5" rx="8" ry="2.3" fill="#8ec4e6"/><path d="M5 20 C6 27 22 29 27 22" fill="none" stroke="#d6d6d6" stroke-width="2.6"/><path d="M2 22.5 L8.5 18 L8.5 24.5 Z" fill="#d6d6d6"/></svg>
<svg style="left:817px;top:77px" width="32" height="32" viewBox="0 0 32 32"><path d="M6 4 C12 3 14 4 16 4 C12 11 17 18 13 27 C9 27 8 27 3.5 27 C8 19 2 12 6 4 Z" fill="#5aa7d9"/><path d="M18 4 C22 3 25 4 28 4 C24 11 29 18 25 27 C21 27 19 27 15.5 27 C20 19 14 12 18 4 Z" fill="#5aa7d9"/></svg>
<svg style="left:852px;top:77px" width="32" height="32" viewBox="0 0 32 32"><path d="M16 3.5 L28.5 15.5 L16 27.5 L3.5 15.5 Z" fill="#5aa7d9"/><circle cx="16" cy="15.5" r="5.6" fill="#444"/><circle cx="16" cy="15.5" r="3.6" fill="#5c4a4a"/></svg>
<svg style="left:887px;top:77px" width="32" height="32" viewBox="0 0 32 32"><path d="M4 5 L22 14 L27.5 25 L9 16.5 Z" fill="#5aa7d9"/><path d="M5 4.5 L12 5.5 L26 13 L22 14 Z" fill="#5aa7d9"/><ellipse cx="7.5" cy="9.8" rx="5" ry="6" fill="#d6d6d6"/><ellipse cx="24.5" cy="21" rx="5.6" ry="6.4" fill="#5aa7d9" stroke="#2d5f80" stroke-width="1.5"/><ellipse cx="24.5" cy="21" rx="3.2" ry="3.8" fill="#444"/></svg>
<svg style="left:921px;top:77px" width="32" height="32" viewBox="0 0 32 32"><path d="M4 6 C12 4 18 8 21 13 C25 15 27 16 29 18 C24 17 18 18 13 22 L8 26 C9 19 7 12 4 6 Z" fill="#5aa7d9"/></svg>
<svg style="left:957px;top:77px" width="32" height="32" viewBox="0 0 32 32"><path d="M16 3 L28 9 L28 22 L16 28.5 L4 22 L4 9 Z" fill="#5aa7d9" stroke="#2d5f80" stroke-width="1.2"/><path d="M4 9 L16 15 L28 9 M16 15 L16 28.5" fill="none" stroke="#e8e8e8" stroke-width="1.6"/></svg>
<svg style="left:992px;top:77px" width="32" height="32" viewBox="0 0 32 32"><rect x="3.5" y="10.5" width="18.5" height="18" fill="#5aa7d9"/><circle cx="20.5" cy="10.5" r="8" fill="#444" stroke="#d8d8d8" stroke-width="1.3"/><path d="M9.5 11 C10 18 14 22 21 22.5" fill="none" stroke="#444" stroke-width="1.2"/></svg>
<svg style="left:1027px;top:77px" width="32" height="32" viewBox="0 0 32 32"><rect x="3.5" y="10.5" width="18.5" height="18" fill="#5aa7d9"/><circle cx="20.5" cy="10.5" r="9.2" fill="#444"/><circle cx="20.5" cy="10.5" r="8" fill="#5aa7d9"/></svg>
<svg style="left:1062px;top:77px" width="32" height="32" viewBox="0 0 32 32"><rect x="3.5" y="10.5" width="18.5" height="18" fill="#5aa7d9"/><circle cx="20.5" cy="11" r="8.6" fill="#444" stroke="#d0d0d0" stroke-width="1.4" stroke-dasharray="2.4 2"/></svg>
<svg style="left:1097px;top:77px" width="32" height="32" viewBox="0 0 32 32"><rect x="3.5" y="10.5" width="18.5" height="18" fill="#5aa7d9"/><circle cx="21" cy="11" r="8.6" fill="none" stroke="#d0d0d0" stroke-width="1.4" stroke-dasharray="2.4 2"/><path d="M12.5 11 L21 11 L21 19.5 C16 19 13 16 12.5 11 Z" fill="#d8d8d8"/></svg>
<svg style="left:1132px;top:77px" width="32" height="32" viewBox="0 0 32 32"><path d="M16 3.5 L28.5 15.5 L16 27.5 L3.5 15.5 Z" fill="#5aa7d9"/><path d="M9 22.5 L23 8.5" stroke="#d8d8c8" stroke-width="1.8"/></svg>
<svg style="left:1167px;top:77px" width="32" height="32" viewBox="0 0 32 32"><path d="M16 3.5 L28.5 15.5 L16 27.5 L3.5 15.5 Z" fill="#5aa7d9"/><path d="M8.5 23 L23.5 8" stroke="#444" stroke-width="3"/></svg>
<svg style="left:1202px;top:77px" width="32" height="32" viewBox="0 0 32 32"><path d="M20 4 A8 8 0 1 0 27 16 L20 11 L26 6.5 A8 8 0 0 0 20 4 Z" fill="#d6d6d6" transform="rotate(20 20 11)"/><circle cx="8.5" cy="20" r="6.5" fill="#5aa7d9"/><circle cx="15" cy="23.5" r="5.3" fill="#444" stroke="#7fc0d0" stroke-width="1.5"/></svg>
<svg style="left:1237px;top:77px" width="32" height="32" viewBox="0 0 32 32"><path d="M17 5 L29 14 L19 27 L6 18 Z" fill="#5aa7d9"/><path d="M11.5 11.5 L23.5 20.5 M17 5 L6 18" stroke="#2d5f80" stroke-width="1"/><path d="M4 4 L10 10" stroke="#d6d6d6" stroke-width="2.6"/><path d="M5.5 12 L12.5 12.5 L12 5.5 Z" fill="#d6d6d6"/></svg>
<svg style="left:1272px;top:77px" width="32" height="32" viewBox="0 0 32 32"><path d="M19 5 L30 14 L21 24 L10 15 Z" fill="#5aa7d9"/><path d="M6 20 L10.5 15.5 L19 23.5 L14.5 28 Z" fill="#d6d6d6"/><path d="M5 11.5 L10 6.5" stroke="#d6d6d6" stroke-width="2.6"/><path d="M6 4 L13 3.5 L12.5 10.5 Z" fill="#d6d6d6"/></svg>
<svg style="left:1307px;top:77px" width="32" height="32" viewBox="0 0 32 32"><rect x="13" y="3.5" width="7" height="16" fill="#5aa7d9"/><rect x="21" y="3.5" width="7" height="16" fill="#5aa7d9"/><rect x="5" y="12" width="3" height="15" fill="#d6d6d6"/><rect x="9" y="12" width="3" height="15" fill="#d6d6d6"/><rect x="13" y="20.5" width="3" height="6.5" fill="#d6d6d6"/><rect x="17" y="20.5" width="3" height="6.5" fill="#d6d6d6"/></svg>
<svg style="left:1342px;top:77px" width="32" height="32" viewBox="0 0 32 32"><path d="M3 14 C4 24 12 29 21 27 C25 26 27 23 27 21 C20 25 10 22 6.5 12 Z" fill="#5aa7d9"/><path d="M29 5 L19 15" stroke="#d6d6d6" stroke-width="4" stroke-linecap="round"/><path d="M19.5 13 L10 24 L17 21 L22 15.5 Z" fill="#e2c7c7"/></svg>
<svg style="left:1378px;top:77px" width="32" height="32" viewBox="0 0 32 32"><path d="M14 4 L27 9 L26 21 L13 27.5 L4 19 Z" fill="#5aa7d9"/><path d="M5 27 L28 4" stroke="#c8b8c0" stroke-width="1.3"/><path d="M17 5 L15 26" stroke="#2d5f80" stroke-width="1"/></svg>
<svg style="left:22px;top:59px" width="13" height="8" viewBox="0 0 13 8"><path d="M0.5 1.5 H12.5 M0.5 5.5 H12.5" stroke="#b0b0b0" stroke-width="1.6"/></svg>
<svg style="left:21px;top:91px" width="14" height="14" viewBox="0 0 14 14"><circle cx="7" cy="7" r="4" fill="none" stroke="#c8c8c8" stroke-width="2"/><path d="M7 0.5 V3 M7 11 V13.5 M0.5 7 H3 M11 7 H13.5 M2.4 2.4 L4 4 M10 10 L11.6 11.6 M2.4 11.6 L4 10 M10 4 L11.6 2.4" stroke="#c8c8c8" stroke-width="1.6"/></svg>
<svg style="left:125.4px;top:21px" width="4" height="20" viewBox="0 0 4 20"><path d="M2 0 C3.8 7 3.8 13 2 20 C0.2 13 0.2 7 2 0 Z" fill="#7e7e7e"/></svg>
<svg style="left:284px;top:21px" width="4" height="20" viewBox="0 0 4 20"><path d="M2 0 C3.8 7 3.8 13 2 20 C0.2 13 0.2 7 2 0 Z" fill="#7e7e7e"/></svg>
<svg style="left:398.5px;top:21px" width="4" height="20" viewBox="0 0 4 20"><path d="M2 0 C3.8 7 3.8 13 2 20 C0.2 13 0.2 7 2 0 Z" fill="#7e7e7e"/></svg>
<svg style="left:681px;top:21px" width="4" height="20" viewBox="0 0 4 20"><path d="M2 0 C3.8 7 3.8 13 2 20 C0.2 13 0.2 7 2 0 Z" fill="#7e7e7e"/></svg>
<svg style="left:260.5px;top:22px" width="7" height="19" viewBox="0 0 7 19"><path d="M1 0 L1.8 0 L1.8 5.7 L5.5 9.5 L1.8 13.3 L1.8 19 L1 19 Z" fill="#7e7e7e"/></svg>
<svg style="left:375px;top:22px" width="7" height="19" viewBox="0 0 7 19"><path d="M1 0 L1.8 0 L1.8 5.7 L5.5 9.5 L1.8 13.3 L1.8 19 L1 19 Z" fill="#7e7e7e"/></svg>
<svg style="left:657.5px;top:22px" width="7" height="19" viewBox="0 0 7 19"><path d="M1 0 L1.8 0 L1.8 5.7 L5.5 9.5 L1.8 13.3 L1.8 19 L1 19 Z" fill="#7e7e7e"/></svg>
<svg style="left:815.5px;top:22px" width="7" height="19" viewBox="0 0 7 19"><path d="M1 0 L1.8 0 L1.8 5.7 L5.5 9.5 L1.8 13.3 L1.8 19 L1 19 Z" fill="#7e7e7e"/></svg>
<svg style="left:144px;top:23px" width="13" height="16" viewBox="0 0 13 16"><path d="M0 0 L7.5 0 L12.3 5 L12.3 16 L0 16 Z" fill="#d2d2d2"/><path d="M7.5 0 L7.5 5 L12.3 5" fill="none" stroke="#444" stroke-width="1"/></svg>
<svg style="left:165px;top:25px" width="18" height="13" viewBox="0 0 18 13"><path d="M0.5 12.5 L0.5 1 L5.5 1 L7 2.8 L14 2.8 L14 5 L4.5 5 L1.2 12.5 Z" fill="#d2d2d2"/><path d="M5.2 6.2 L17.5 6.2 L14.3 12.7 L2 12.7 Z" fill="#d2d2d2"/></svg>
<svg style="left:188.8px;top:24px" width="14.2" height="13.6" viewBox="0 0 14.2 13.6"><path d="M0 0 L14.2 0 L14.2 13.6 L0 13.6 Z" fill="#d2d2d2"/><rect x="2.6" y="0" width="8.6" height="5.2" fill="#444"/><rect x="3.6" y="8.2" width="7.2" height="3.8" fill="#444"/><rect x="7.2" y="9" width="2.6" height="2.4" fill="#d2d2d2"/></svg>
<svg style="left:208.5px;top:24.5px" width="19.5" height="13.5" viewBox="0 0 19.5 13.5"><path d="M5.5 4 L13 4 C19 4 19 12 13 12 L10 12" fill="none" stroke="#d2d2d2" stroke-width="2.8"/><path d="M0 4 L6.2 0 L6.2 8 Z" fill="#d2d2d2"/></svg>
<svg style="left:233px;top:24.5px" width="19.5" height="13.5" viewBox="0 0 19.5 13.5"><path d="M13 4 L7 4 C1 4 1 12 7 12 L9 12" fill="none" stroke="#d2d2d2" stroke-width="2.8"/><path d="M18.5 4 L12.3 0 L12.3 8 Z" fill="#d2d2d2"/></svg>
<svg style="left:300.5px;top:22px" width="18" height="19" viewBox="0 0 18 19"><rect x="0.5" y="0.5" width="4.8" height="4.8" fill="#d2d2d2"/><rect x="0.5" y="9.5" width="4.8" height="4.8" fill="#d2d2d2"/><path d="M3 5 V10 M6 3 H11 V7" stroke="#3fb0a8" stroke-width="1" fill="none"/><path transform="translate(9.5 5.5)" d="M0 0 L0 11.5 L2.8 9 L4.8 13.2 L6.8 12.2 L4.8 8.2 L8.4 8 Z" fill="#e0e0e0" stroke="#444" stroke-width="0.6"/></svg>
<div style="left:320.5px;top:19.5px;width:22.3px;height:23px;background:#5589b8;"></div>
<svg style="left:323px;top:22px" width="18" height="19" viewBox="0 0 18 19"><circle cx="5.5" cy="12" r="4.3" fill="#e4e4e4"/><path d="M6.5 11 V2.5 H13.5 V8" fill="none" stroke="#1d4f6d" stroke-width="1.6"/><path transform="translate(9.5 5.5)" d="M0 0 L0 11.5 L2.8 9 L4.8 13.2 L6.8 12.2 L4.8 8.2 L8.4 8 Z" fill="#e6e6e6" stroke="#2d5f80" stroke-width="0.6"/></svg>
<svg style="left:347.5px;top:22px" width="18" height="19" viewBox="0 0 18 19"><rect x="0.3" y="0.5" width="4.6" height="4.6" fill="#d2d2d2"/><rect x="6" y="0.5" width="4.6" height="4.6" fill="#d2d2d2"/><rect x="0.3" y="6.2" width="4.6" height="4.6" fill="#d2d2d2"/><rect x="6" y="6.2" width="4.6" height="4.6" fill="#d2d2d2"/><path transform="translate(8.8 5.5)" d="M0 0 L0 11.5 L2.8 9 L4.8 13.2 L6.8 12.2 L4.8 8.2 L8.4 8 Z" fill="#e0e0e0" stroke="#444" stroke-width="0.6"/></svg>
<svg style="left:414.5px;top:22px" width="20" height="20" viewBox="0 0 20 20"><path d="M7.2 13.5 L3 9.3 C0.6 6.5 1.4 3.2 4.4 2.1 C6.8 1.2 9 2.4 10.6 4.4 L13.4 7.7" fill="none" stroke="#d6d6d6" stroke-width="2.9"/><path d="M6.1 12.3 L8.2 14.5 M12.4 6.6 L14.4 8.8" stroke="#f4f4f4" stroke-width="1.6"/><path d="M9 13 H18 M9 17 H18 M11.5 11 V19 M15.5 11 V19" stroke="#3fb0a8" stroke-width="1.1"/></svg>
<svg style="left:437.5px;top:22px" width="20" height="20" viewBox="0 0 20 20"><path d="M7.2 13.5 L3 9.3 C0.6 6.5 1.4 3.2 4.4 2.1 C6.8 1.2 9 2.4 10.6 4.4 L13.4 7.7" fill="none" stroke="#d6d6d6" stroke-width="2.9"/><path d="M6.1 12.3 L8.2 14.5 M12.4 6.6 L14.4 8.8" stroke="#f4f4f4" stroke-width="1.6"/><path d="M6 16 C10 18 16 15 17 9" fill="none" stroke="#3fb0a8" stroke-width="1.4"/><path d="M7 15 V19 M5.5 17.5 H8.5" stroke="#bbb" stroke-width="0.9"/></svg>
<svg style="left:460px;top:22px" width="20" height="20" viewBox="0 0 20 20"><path d="M7.2 13.5 L3 9.3 C0.6 6.5 1.4 3.2 4.4 2.1 C6.8 1.2 9 2.4 10.6 4.4 L13.4 7.7" fill="none" stroke="#d6d6d6" stroke-width="2.9"/><path d="M6.1 12.3 L8.2 14.5 M12.4 6.6 L14.4 8.8" stroke="#f4f4f4" stroke-width="1.6"/><rect x="11.5" y="13.5" width="4.5" height="4.5" fill="#3fb0a8"/><path d="M9 15.7 H19" stroke="#666" stroke-width="0.8" stroke-dasharray="1 1"/></svg>
<svg style="left:483.5px;top:22px" width="20" height="20" viewBox="0 0 20 20"><path d="M7.2 13.5 L3 9.3 C0.6 6.5 1.4 3.2 4.4 2.1 C6.8 1.2 9 2.4 10.6 4.4 L13.4 7.7" fill="none" stroke="#d6d6d6" stroke-width="2.9"/><path d="M6.1 12.3 L8.2 14.5 M12.4 6.6 L14.4 8.8" stroke="#f4f4f4" stroke-width="1.6"/><circle cx="12.5" cy="15.5" r="2.3" fill="none" stroke="#3fb0a8" stroke-width="1.1"/><circle cx="16.5" cy="4" r="1.6" fill="none" stroke="#3fb0a8" stroke-width="1"/><path d="M8 15.5 H18 M12.5 12 V19.5" stroke="#3fb0a8" stroke-width="0.7" stroke-dasharray="1 1"/></svg>
<svg style="left:506.5px;top:22px" width="20" height="20" viewBox="0 0 20 20"><path d="M7.2 13.5 L3 9.3 C0.6 6.5 1.4 3.2 4.4 2.1 C6.8 1.2 9 2.4 10.6 4.4 L13.4 7.7" fill="none" stroke="#d6d6d6" stroke-width="2.9"/><path d="M6.1 12.3 L8.2 14.5 M12.4 6.6 L14.4 8.8" stroke="#f4f4f4" stroke-width="1.6"/><path d="M7 9.5 L13 6 L18 13.5 L11.5 17.5 Z M10 7.7 L15 15.5" fill="none" stroke="#3fb0a8" stroke-width="1.1"/></svg>
<svg style="left:530px;top:22px" width="20" height="20" viewBox="0 0 20 20"><path d="M7.2 13.5 L3 9.3 C0.6 6.5 1.4 3.2 4.4 2.1 C6.8 1.2 9 2.4 10.6 4.4 L13.4 7.7" fill="none" stroke="#d6d6d6" stroke-width="2.9"/><path d="M6.1 12.3 L8.2 14.5 M12.4 6.6 L14.4 8.8" stroke="#f4f4f4" stroke-width="1.6"/></svg>
<svg style="left:698px;top:23.2px" width="16.3" height="16" viewBox="0 0 16.3 16"><rect x="0" y="5" width="16.3" height="11" fill="#d2d2d2"/><rect x="0" y="0" width="16.3" height="3.6" fill="#d2d2d2"/><path d="M2 0 L4.5 3.6 M6 0 L8.5 3.6 M10 0 L12.5 3.6 M14 0 L16.3 3.4" stroke="#444" stroke-width="1.4"/><ellipse cx="8.2" cy="10.5" rx="5.6" ry="3.1" fill="none" stroke="#444" stroke-width="1"/><circle cx="8.2" cy="10.5" r="1.7" fill="#444"/></svg>
<svg style="left:721px;top:23.2px" width="16.3" height="16" viewBox="0 0 16.3 16"><rect x="0" y="5" width="16.3" height="11" fill="#d2d2d2"/><rect x="0" y="0" width="16.3" height="3.6" fill="#d2d2d2"/><path d="M2 0 L4.5 3.6 M6 0 L8.5 3.6 M10 0 L12.5 3.6 M14 0 L16.3 3.4" stroke="#444" stroke-width="1.4"/></svg>
<svg style="left:744px;top:23.2px" width="16.3" height="16" viewBox="0 0 16.3 16"><rect x="0" y="5" width="16.3" height="11" fill="#d2d2d2"/><rect x="0" y="0" width="16.3" height="3.6" fill="#d2d2d2"/><path d="M2 0 L4.5 3.6 M6 0 L8.5 3.6 M10 0 L12.5 3.6 M14 0 L16.3 3.4" stroke="#444" stroke-width="1.4"/></svg>
<span style="left:745.5px;top:27.00px;font-size:7.5px;color:#3c3c3c;letter-spacing:-0.005px;">IPR</span>
<svg style="left:767px;top:23.2px" width="20" height="17" viewBox="0 0 20 17"><rect x="0" y="5" width="16.3" height="11" fill="#d2d2d2"/><rect x="0" y="0" width="16.3" height="3.6" fill="#d2d2d2"/><path d="M2 0 L4.5 3.6 M6 0 L8.5 3.6 M10 0 L12.5 3.6 M14 0 L16.3 3.4" stroke="#444" stroke-width="1.4"/><circle cx="12.8" cy="11.8" r="3.2" fill="#444" stroke="#5fa9cf" stroke-width="1.8"/><circle cx="12.8" cy="11.8" r="4.6" fill="none" stroke="#5fa9cf" stroke-width="1.2" stroke-dasharray="1.5 1.3"/></svg>
<svg style="left:787px;top:19.5px" width="22" height="23" viewBox="0 0 22 23"><circle cx="11" cy="11.5" r="8.2" fill="#4f95c5"/><circle cx="11.2" cy="10.8" r="3.6" fill="#d8d6a8" stroke="#2a4fa0" stroke-width="1.4"/><path d="M6 1.5 H1.5 V21.5 H6 M16 1.5 H20.5 V21.5 H16" fill="none" stroke="#28d428" stroke-width="2.4"/></svg>
<svg style="left:1827px;top:22.5px" width="19" height="18" viewBox="0 0 19 18"><path d="M1.5 6 L7 3 L12 5.5 L12 15 L6.5 18 L1.5 15 Z" fill="#cfcfcf"/><path d="M1.5 10 L6.5 13 L12 10 M6.5 8.5 V18 M4 7.5 V16.5 M9.3 7 V16.5" stroke="#555" stroke-width="0.8" fill="none"/><rect x="10" y="1" width="8" height="2.6" rx="1" fill="#d8d8d8"/><rect x="13.2" y="3" width="2" height="15" fill="#d8d8d8"/></svg>
<svg style="left:1850.5px;top:22.5px" width="19" height="18" viewBox="0 0 19 18"><path d="M0.5 2.2 H7 M3 9.2 H8 M2 16.5 H8" stroke="#d0d0d0" stroke-width="1.2"/><rect x="8" y="0.5" width="10" height="3.6" fill="none" stroke="#d8d8d8" stroke-width="1.3"/><rect x="8.5" y="7.3" width="9.5" height="3.8" fill="#cfcfcf"/><rect x="8" y="14.8" width="10" height="3.6" fill="none" stroke="#d8d8d8" stroke-width="1.3"/></svg>
<svg style="left:1874.5px;top:22.5px" width="17" height="18" viewBox="0 0 17 18"><rect x="0.5" y="0.8" width="2.4" height="2.4" fill="#d0d0d0"/><rect x="0.5" y="7.8" width="2.4" height="2.4" fill="#d0d0d0"/><rect x="0.5" y="14.8" width="2.4" height="2.4" fill="#d0d0d0"/><path d="M4 2 H8 M4 9 H11 M4 16 H11" stroke="#d0d0d0" stroke-width="1.1"/><rect x="8" y="0.6" width="8.6" height="2.8" rx="1" fill="#ddd8c8"/><rect x="11.5" y="3" width="2.2" height="15" fill="#d8d8d8"/></svg>
<div style="left:1894.5px;top:20.5px;width:22.5px;height:20px;background:#5589b8;"></div>
<svg style="left:1896.5px;top:22.5px" width="19" height="18" viewBox="0 0 19 18"><path d="M9.5 1.5 L17.5 7.5 L9.5 13 L1.5 7.5 Z" fill="#e2e2e2"/><path d="M5.5 6.3 H13.5 M5.5 8.6 H13.5" stroke="#5a4040" stroke-width="0.9" stroke-dasharray="3 1"/><path d="M1.5 11 L9.5 16.5 L17.5 11 M1.5 14.5 L9.5 20 L17.5 14.5" fill="none" stroke="#e2e2e2" stroke-width="1.6"/></svg>
<svg style="left:47.4px;top:138.5px" width="4" height="17.5" viewBox="0 0 4 17.5"><path d="M2 0 C3.8 6.125 3.8 11.375 2 17.5 C0.2 11.375 0.2 6.125 2 0 Z" fill="#7e7e7e"/></svg>
<svg style="left:178.6px;top:138.5px" width="4" height="17.5" viewBox="0 0 4 17.5"><path d="M2 0 C3.8 6.125 3.8 11.375 2 17.5 C0.2 11.375 0.2 6.125 2 0 Z" fill="#7e7e7e"/></svg>
<svg style="left:329px;top:138.5px" width="4" height="17.5" viewBox="0 0 4 17.5"><path d="M2 0 C3.8 6.125 3.8 11.375 2 17.5 C0.2 11.375 0.2 6.125 2 0 Z" fill="#7e7e7e"/></svg>
<svg style="left:480.7px;top:138.5px" width="4" height="17.5" viewBox="0 0 4 17.5"><path d="M2 0 C3.8 6.125 3.8 11.375 2 17.5 C0.2 11.375 0.2 6.125 2 0 Z" fill="#7e7e7e"/></svg>
<svg style="left:571.3px;top:138.5px" width="4" height="17.5" viewBox="0 0 4 17.5"><path d="M2 0 C3.8 6.125 3.8 11.375 2 17.5 C0.2 11.375 0.2 6.125 2 0 Z" fill="#7e7e7e"/></svg>
<svg style="left:602.5px;top:138.5px" width="4" height="17.5" viewBox="0 0 4 17.5"><path d="M2 0 C3.8 6.125 3.8 11.375 2 17.5 C0.2 11.375 0.2 6.125 2 0 Z" fill="#7e7e7e"/></svg>
<svg style="left:673.5px;top:138.5px" width="4" height="17.5" viewBox="0 0 4 17.5"><path d="M2 0 C3.8 6.125 3.8 11.375 2 17.5 C0.2 11.375 0.2 6.125 2 0 Z" fill="#7e7e7e"/></svg>
<svg style="left:57px;top:138px" width="18" height="18" viewBox="0 0 18 18"><rect x="1.6" y="4.6" width="9" height="7.4" rx="1" fill="#d4d4d4"/><path d="M11 8.3 L16.3 4.3 L16.3 12.3 Z" fill="#d4d4d4"/></svg>
<svg style="left:78px;top:138px" width="18" height="18" viewBox="0 0 18 18"><rect x="3" y="3.6" width="8" height="6" fill="#d4d4d4"/><path d="M11.4 6.5 L15.6 3 L15.6 10 Z" fill="#d4d4d4"/><circle cx="5.2" cy="11.6" r="3" fill="#444" stroke="#3e9fc0" stroke-width="1.6"/></svg>
<svg style="left:98px;top:138px" width="18" height="18" viewBox="0 0 18 18"><path d="M5.2 3.3 L11 3.3 L11 13.8 L8.1 11 L5.2 13.8 Z" fill="#d4d4d4"/></svg>
<svg style="left:117px;top:138px" width="18" height="18" viewBox="0 0 18 18"><path d="M8 2 C5 6 4.5 10 6 14 L12 14 C12.5 9 11 5 8 2 Z" fill="#35a7a3"/><path d="M2.5 15.5 L13 15.5 L15.5 12.5 M3.5 13.6 L12 13.6" stroke="#e0e0e0" stroke-width="1.2" fill="none"/></svg>
<svg style="left:138px;top:138px" width="18" height="18" viewBox="0 0 18 18"><path d="M8 2.5 V10 M3 9.5 H9" stroke="#d4d4d4" stroke-width="1.4"/><path d="M8 1 L10 4 H6 Z M1.5 9.5 L4.2 7.7 V11.3 Z" fill="#d4d4d4"/><circle cx="12.8" cy="9.6" r="2.5" fill="none" stroke="#35a7a3" stroke-width="1.4"/><path d="M11 11.5 L7.5 15.5" stroke="#35a7a3" stroke-width="1.6"/></svg>
<svg style="left:158px;top:138px" width="18" height="18" viewBox="0 0 18 18"><path d="M13 3.8 L6 10.8" stroke="#d4d4d4" stroke-width="3.6" stroke-linecap="round"/><path d="M5.3 9.5 L2.5 14 L7.3 11.8 Z" fill="#35a7a3"/><path d="M8 14.5 C11 15.5 13.5 14 13.5 11" fill="none" stroke="#c8c8c8" stroke-width="1.2"/></svg>
<div style="left:188px;top:137px;width:19.6px;height:19.5px;background:#5589b8;"></div>
<svg style="left:189px;top:138px" width="18" height="18" viewBox="0 0 18 18"><rect x="3.6" y="3.6" width="10" height="10" fill="#2b2b2b" stroke="#e6e6e6" stroke-width="1.2"/><path d="M7 3.6 V13.6 M10.3 3.6 V13.6 M3.6 7 H13.6 M3.6 10.3 H13.6" stroke="#e6e6e6" stroke-width="1.1"/></svg>
<svg style="left:208px;top:138px" width="18" height="18" viewBox="0 0 18 18"><rect x="2.4" y="3.8" width="13.4" height="10.6" fill="#2f2f2f" stroke="#d4d4d4" stroke-width="1.2"/><path d="M2.4 6.2 H15.8 M2.4 12 H15.8" stroke="#d4d4d4" stroke-width="1" stroke-dasharray="1.6 1.2"/><path d="M5 9 H13" stroke="#777" stroke-width="2"/></svg>
<svg style="left:228px;top:138px" width="18" height="18" viewBox="0 0 18 18"><rect x="2.4" y="3.8" width="13.4" height="10.6" fill="#2f2f2f" stroke="#d4d4d4" stroke-width="1.2"/><circle cx="9.1" cy="9.1" r="2.8" fill="#35a7a3"/></svg>
<div style="left:248px;top:137.5px;width:18.5px;height:19px;background:#363636;border-radius:2px;"></div>
<svg style="left:248px;top:138px" width="18" height="18" viewBox="0 0 18 18"><circle cx="9.2" cy="9.2" r="3.2" fill="#4a4a4a"/></svg>
<svg style="left:268px;top:138px" width="18" height="18" viewBox="0 0 18 18"><rect x="2.4" y="3.8" width="13.4" height="10.6" fill="#2f2f2f" stroke="#d4d4d4" stroke-width="1.2"/><path d="M3 9.1 H15 M9.1 4.5 V13.8" stroke="#35a7a3" stroke-width="1" stroke-dasharray="1.4 1"/><circle cx="9.1" cy="9.1" r="2" fill="none" stroke="#35a7a3" stroke-width="1"/></svg>
<svg style="left:288px;top:138px" width="18" height="18" viewBox="0 0 18 18"><rect x="2.4" y="3.8" width="13.4" height="10.6" fill="#2f2f2f" stroke="#d4d4d4" stroke-width="1.2"/><rect x="6" y="8.5" width="2.6" height="2.6" fill="#35a7a3"/><rect x="9.6" y="6.4" width="2.6" height="2.6" fill="#35a7a3"/></svg>
<svg style="left:308px;top:138px" width="18" height="18" viewBox="0 0 18 18"><rect x="2.4" y="3.8" width="13.4" height="10.6" fill="#2f2f2f" stroke="#d4d4d4" stroke-width="1.2"/><path d="M6.2 7 H12 M9.1 7 V12" stroke="#35a7a3" stroke-width="2"/></svg>
<svg style="left:339px;top:138px" width="18" height="18" viewBox="0 0 18 18"><path d="M9 2 L15.2 5.4 V12.6 L9 16 L2.8 12.6 V5.4 Z M2.8 5.4 L9 8.8 L15.2 5.4 M9 8.8 V16" fill="none" stroke="#35a7a3" stroke-width="1.3"/></svg>
<div style="left:359px;top:137px;width:19.5px;height:19.5px;background:#5589b8;"></div>
<svg style="left:360px;top:138px" width="18" height="18" viewBox="0 0 18 18"><path d="M9 2 L15.2 5.4 L9 8.8 L2.8 5.4 Z" fill="#e8e8e8"/><path d="M2.8 5.4 L9 8.8 V16 L2.8 12.6 Z" fill="#c9c9c9"/><path d="M15.2 5.4 L9 8.8 V16 L15.2 12.6 Z" fill="#a07a6a"/><path d="M9 2 L15.2 5.4 V12.6 L9 16 L2.8 12.6 V5.4 Z" fill="none" stroke="#2e5d7c" stroke-width="0.9"/></svg>
<svg style="left:380px;top:138px" width="18" height="18" viewBox="0 0 18 18"><path d="M9 2.5 A6.5 6.5 0 0 0 9 15.5 Z" fill="#d8d8d8"/><path d="M9 2.5 A6.5 6.5 0 0 1 9 15.5 Z" fill="#555"/><rect x="9" y="5" width="3" height="3" fill="#d8d8d8"/><rect x="12" y="8" width="3" height="3" fill="#d8d8d8"/><rect x="9" y="11" width="3" height="3" fill="#d8d8d8"/></svg>
<svg style="left:399px;top:138px" width="18" height="18" viewBox="0 0 18 18"><circle cx="9" cy="9" r="7" fill="none" stroke="#3d8fb0" stroke-width="1.2"/><path d="M9 4.5 L13 6.8 V11.2 L9 13.5 L5 11.2 V6.8 Z M5 6.8 L9 9 L13 6.8 M9 9 V13.5" fill="#4a7a8a" stroke="#9fd0e0" stroke-width="0.9"/></svg>
<div style="left:418.5px;top:137px;width:20px;height:19.5px;background:#5589b8;"></div>
<svg style="left:419.5px;top:138px" width="18" height="18" viewBox="0 0 18 18"><circle cx="9" cy="9" r="6.6" fill="#e8e8e8"/><path d="M9 2.4 A6.6 6.6 0 0 0 4 4.8 L9 4.8 Z M9 4.8 H13.6 L14.5 6 V9 H9 Z M3 6 L4 4.8 V9 H2.4 Z M4 4.8 H9 V9 H4 Z" fill="none"/><rect x="4.5" y="4.5" width="4.5" height="4.5" fill="#222"/><rect x="9" y="9" width="4.5" height="4.5" fill="#222"/><path d="M9 2.4 A6.6 6.6 0 0 1 13.5 4.5 H9 Z" fill="#222"/><path d="M2.4 9 H4.5 V13.2 A6.6 6.6 0 0 1 2.4 9 Z" fill="#222"/><path d="M13.5 4.5 A6.6 6.6 0 0 1 15.6 9 H13.5 Z" fill="#222"/><path d="M4.5 13.5 H9 V15.6 A6.6 6.6 0 0 1 4.5 13.5 Z" fill="#222"/></svg>
<svg style="left:439px;top:138px" width="18" height="18" viewBox="0 0 18 18"><circle cx="9" cy="8" r="3.6" fill="#dcdcdc"/><rect x="7.4" y="11" width="3.2" height="3.6" fill="#dcdcdc"/><path d="M9 1 V2.6 M3.5 3 L4.7 4.2 M14.5 3 L13.3 4.2 M2 8 H3.8 M14.2 8 H16" stroke="#bbb" stroke-width="1"/></svg>
<svg style="left:459px;top:138px" width="18" height="18" viewBox="0 0 18 18"><circle cx="11" cy="8.5" r="5" fill="#3aa9c0"/><circle cx="11" cy="8.5" r="2.6" fill="#6fcfe0"/><path d="M1.5 11 L5.5 7.5 L7 10.5 L3.5 14 Z" fill="#777"/></svg>
<svg style="left:490px;top:138px" width="18" height="18" viewBox="0 0 18 18"><circle cx="9" cy="7.5" r="4.6" fill="#9a9a9a"/><circle cx="9" cy="7" r="2.2" fill="#cfcfcf"/><path d="M5.5 12.5 C7 15.5 11 15.5 12.5 12.5" fill="none" stroke="#35a7a3" stroke-width="1.4"/></svg>
<svg style="left:510px;top:138px" width="18" height="18" viewBox="0 0 18 18"><circle cx="11.5" cy="9" r="5.2" fill="#d8d8d8"/><path d="M7 4.2 A5.4 5.4 0 0 0 7 13.8 M4 5 A5 5 0 0 0 4 13" fill="none" stroke="#bdbdbd" stroke-width="1.3"/></svg>
<svg style="left:530px;top:138px" width="18" height="18" viewBox="0 0 18 18"><circle cx="9" cy="9" r="5.6" fill="none" stroke="#35a7a3" stroke-width="1.6" stroke-dasharray="5 2.5"/><circle cx="9" cy="9" r="3" fill="#504040"/></svg>
<div style="left:550.5px;top:137.5px;width:19px;height:19px;background:#383838;border-radius:2px;"></div>
<svg style="left:551px;top:138px" width="18" height="18" viewBox="0 0 18 18"><rect x="5" y="6" width="8" height="7" fill="#444c50"/></svg>
<svg style="left:580.5px;top:138px" width="18" height="18" viewBox="0 0 18 18"><rect x="3" y="2.5" width="8" height="8" fill="none" stroke="#35a7a3" stroke-width="1.2" stroke-dasharray="2 1.4"/><path transform="translate(8.6 6)" d="M0 0 L0 11.5 L2.8 9 L4.8 13.2 L6.8 12.2 L4.8 8.2 L8.4 8 Z" fill="#e0e0e0" stroke="#444" stroke-width="0.5"/></svg>
<svg style="left:612px;top:138px" width="18" height="18" viewBox="0 0 18 18"><rect x="6.5" y="2.5" width="9" height="9" fill="#e4e4e4"/><rect x="2.5" y="6.5" width="9" height="9" fill="#e4e4e4" stroke="#444" stroke-width="1.2"/><rect x="6" y="9" width="3.5" height="3.5" fill="#444"/></svg>
<svg style="left:632px;top:138px" width="18" height="18" viewBox="0 0 18 18"><rect x="6.8" y="2.5" width="8.6" height="8.6" fill="none" stroke="#dcdcdc" stroke-width="1.2"/><rect x="9.5" y="5" width="3" height="3" fill="#bbb"/><rect x="2.5" y="7.5" width="9" height="8" fill="#3b9aa6"/></svg>
<svg style="left:652px;top:138px" width="18" height="18" viewBox="0 0 18 18"><rect x="2.8" y="3" width="12" height="12" fill="#2f2f2f" stroke="#dcdcdc" stroke-width="1.2"/><path d="M6 6 L11.5 11.5" stroke="#3b9aa6" stroke-width="2"/><rect x="5" y="5" width="3" height="3" fill="#bbb"/></svg>
<svg style="left:684px;top:136.5px" width="20" height="21" viewBox="0 0 20 21"><circle cx="10" cy="10.5" r="6" fill="#c8c8d8"/><path d="M10 10.5 L10 4.5 A6 6 0 0 1 15.2 7.5 Z" fill="#3a6ab0"/><path d="M10 10.5 L15.2 13.5 A6 6 0 0 1 10 16.5 Z" fill="#b05a8a"/><path d="M10 10.5 L4.8 13.5 A6 6 0 0 1 4.8 7.5 Z" fill="#444"/><circle cx="10" cy="10.5" r="2" fill="#eee"/><path d="M5.5 1.5 H1.5 V19.5 H5.5 M14.5 1.5 H18.5 V19.5 H14.5" fill="none" stroke="#28d428" stroke-width="2.2"/></svg>
<svg style="left:745.5px;top:136.5px" width="20" height="21" viewBox="0 0 20 21"><circle cx="10" cy="10.5" r="5.6" fill="#c8c8c8"/><path d="M10 4.9 A5.6 5.6 0 0 0 10 16.1 A7 7 0 0 1 10 4.9 Z" fill="#3c2c6a"/><path d="M5.5 1.5 H1.5 V19.5 H5.5 M14.5 1.5 H18.5 V19.5 H14.5" fill="none" stroke="#28d428" stroke-width="2.2"/></svg>
<svg style="left:808.5px;top:138px" width="18.5" height="18" viewBox="0 0 18.5 18"><circle cx="9.2" cy="9" r="6.4" fill="#3fa0c8" stroke="#2a6f90" stroke-width="1"/><path d="M5.4 9 A1.8 2.4 0 1 0 9 9 A1.8 2.4 0 1 0 5.4 9 M10 11 V7 M12 11 V7" fill="none" stroke="#1f5a78" stroke-width="0.9"/></svg>
<svg style="left:4px;top:132.8px" width="36" height="36" viewBox="0 0 36 36"><path d="M12.5 5.5 L12.5 27 L17.5 22.5 L21.2 30.5 L25 28.7 L21.3 21 L28 20.5 Z" fill="#e2e2e2" stroke="#3d6a88" stroke-width="0.8"/></svg>
<svg style="left:4px;top:171px" width="36" height="36" viewBox="0 0 36 36"><ellipse cx="14" cy="14" rx="9.5" ry="7" transform="rotate(-25 14 14)" fill="none" stroke="#35a7a3" stroke-width="2.2" stroke-dasharray="5 2.6"/><path transform="translate(17.5 12) scale(1.25)" d="M0 0 L0 11.5 L2.8 9 L4.8 13.2 L6.8 12.2 L4.8 8.2 L8.4 8 Z" fill="#e0e0e0" stroke="#444" stroke-width="0.5"/></svg>
<svg style="left:4px;top:207px" width="36" height="36" viewBox="0 0 36 36"><ellipse cx="13" cy="21" rx="8.5" ry="6.5" transform="rotate(35 13 21)" fill="none" stroke="#35a7a3" stroke-width="2.2" stroke-dasharray="5 2.6"/><path d="M32 5 L21 16" stroke="#dcdcdc" stroke-width="3.4" stroke-linecap="round"/><path d="M21.5 14 C17 16 14 19 12.5 22.5 C17 22.5 21 20.5 23.5 16 Z" fill="#dcdcdc"/></svg>
<svg style="left:4px;top:244px" width="36" height="36" viewBox="0 0 36 36"><rect x="12.5" y="12.5" width="11" height="11" fill="#dadada"/><path d="M18 4.5 L21.5 8.5 H14.5 Z M18 31.5 L21.5 27.5 H14.5 Z M4.5 18 L8.5 14.5 V21.5 Z M31.5 18 L27.5 14.5 V21.5 Z" fill="#35a7a3"/></svg>
<svg style="left:4px;top:281px" width="36" height="36" viewBox="0 0 36 36"><path d="M29.5 18 A11.5 11.5 0 1 0 14 28.8" fill="none" stroke="#35a7a3" stroke-width="2"/><path d="M26 17 L29.7 22 L32.6 16.5 Z" fill="#35a7a3"/><path d="M18 10.5 L25 17.5 L18 24.5 L11 17.5 Z" fill="#dadada"/></svg>
<svg style="left:4px;top:317px" width="36" height="36" viewBox="0 0 36 36"><rect x="6.5" y="6.5" width="24" height="24" fill="none" stroke="#cfcfcf" stroke-width="1.2" stroke-dasharray="3 2"/><rect x="6" y="19.5" width="11.5" height="11.5" fill="#dadada"/><path d="M19 12.5 H24 V17.5" fill="none" stroke="#35a7a3" stroke-width="1.6"/></svg>
<svg style="left:8px;top:406px" width="28" height="28" viewBox="0 0 28 28"><rect x="0.8" y="0.8" width="26.4" height="26.4" fill="#d0d0d0" stroke="#2e2e2e" stroke-width="1.4"/><rect x="2.6" y="2.6" width="22.8" height="22.8" fill="none" stroke="#eee" stroke-width="0.8"/><path d="M14 7.76 L17.2 10 L14 12.24 L10.8 10 Z" fill="#2e2e2e"/><path d="M9.5 11.76 L12.7 14 L9.5 16.24 L6.3 14 Z" fill="#2e2e2e"/><path d="M18.5 11.76 L21.7 14 L18.5 16.24 L15.3 14 Z" fill="#2e2e2e"/><path d="M14 15.76 L17.2 18 L14 20.24 L10.8 18 Z" fill="#2e2e2e"/></svg>
<svg style="left:8px;top:443px" width="29" height="29" viewBox="0 0 29 29"><rect x="0.8" y="0.8" width="12" height="12" fill="#444" stroke="#d6d6d6" stroke-width="1.2"/><path d="M6.8 3.3 V10.3 M3.3 6.8 H10.3" stroke="#d6d6d6" stroke-width="1.2"/><rect x="15.2" y="0.8" width="12.5" height="12" fill="#d6d6d6"/><path d="M21.5 4.42 L24.9 6.8 L21.5 9.18 L18.1 6.8 Z" fill="#2e2e2e"/><rect x="0.8" y="15.2" width="12" height="12" fill="#444" stroke="#d6d6d6" stroke-width="1.2"/><path d="M6.8 17.7 V24.7 M3.3 21.2 H10.3" stroke="#d6d6d6" stroke-width="1.2"/><rect x="15.5" y="15.2" width="12" height="12" fill="#444" stroke="#d6d6d6" stroke-width="1.2"/><path d="M21.5 17.7 V24.7 M18 21.2 H25" stroke="#d6d6d6" stroke-width="1.2"/></svg>
<svg style="left:8px;top:481px" width="29" height="29" viewBox="0 0 29 29"><rect x="0.8" y="0.8" width="12" height="27" fill="#444" stroke="#d6d6d6" stroke-width="1.2"/><path d="M4 13 H10 M4 16 H10 M4 19 H10 M4 22 H10" stroke="#d6d6d6" stroke-width="1.1"/><rect x="4" y="4" width="4" height="4" fill="none" stroke="#777" stroke-width="0.8" stroke-dasharray="1 1"/><rect x="15.2" y="0.2" width="13" height="28.2" fill="#d6d6d6"/><path d="M21.7 11.98 L25.3 14.5 L21.7 17.02 L18.1 14.5 Z" fill="#2e2e2e"/></svg>
<svg style="left:8px;top:518px" width="29" height="28" viewBox="0 0 29 28"><rect x="0.2" y="0.2" width="28.6" height="12.6" fill="#d6d6d6"/><path d="M14.5 3.98 L18.1 6.5 L14.5 9.02 L10.9 6.5 Z" fill="#2e2e2e"/><rect x="0.8" y="16.2" width="27.4" height="10.5" fill="#444" stroke="#d6d6d6" stroke-width="1.2"/><path d="M3 19.2 H6 M3 21.5 H6 M3 23.8 H6" stroke="#d6d6d6" stroke-width="0.9"/><path d="M8 23.7 H16 M12 19.2 V23.7 M9.5 21.7 L12 19.2 L14.5 21.7" stroke="#69b0c8" stroke-width="1" fill="none"/><path d="M17 23.2 C19 25.2 21 19.2 23 21.7 S25 22.2 26.5 20.2" stroke="#69b0c8" stroke-width="1" fill="none"/></svg>
<svg style="left:8px;top:555px" width="29" height="29" viewBox="0 0 29 29"><rect x="0.8" y="0.8" width="12" height="27" fill="#444" stroke="#d6d6d6" stroke-width="1.2"/><path d="M3.5 5 H6 M7.8 5 H10.3 M3.5 9 H6 M7.8 9 H10.3 M3.5 13 H6 M7.8 13 H10.3 M3.5 17 H6 M7.8 17 H10.3" stroke="#d6d6d6" stroke-width="1.8"/><rect x="5" y="21" width="4" height="3.6" fill="none" stroke="#d6d6d6" stroke-width="1"/><rect x="15.2" y="0.2" width="13" height="28.2" fill="#d6d6d6"/><path d="M21.7 11.98 L25.3 14.5 L21.7 17.02 L18.1 14.5 Z" fill="#2e2e2e"/></svg>
<svg style="left:8px;top:592px" width="29" height="28" viewBox="0 0 29 28"><rect x="0.2" y="0.2" width="13.4" height="12.6" fill="#d6d6d6"/><path d="M7 4.12 L10.4 6.5 L7 8.88 L3.6 6.5 Z" fill="#2e2e2e"/><rect x="15.6" y="0.8" width="12.6" height="11.6" fill="#3a5a68" stroke="#d6d6d6" stroke-width="1.2"/><rect x="18" y="3.2" width="6" height="3.4" fill="none" stroke="#d6d6d6" stroke-width="0.9"/><rect x="20" y="6.5" width="6" height="3.4" fill="#444" stroke="#d6d6d6" stroke-width="0.9"/><rect x="0.8" y="16.2" width="27.4" height="10.5" fill="#444" stroke="#d6d6d6" stroke-width="1.2"/><path d="M3 19.2 H6 M3 21.5 H6 M3 23.8 H6" stroke="#d6d6d6" stroke-width="0.9"/><path d="M8 23.7 H16 M12 19.2 V23.7 M9.5 21.7 L12 19.2 L14.5 21.7" stroke="#69b0c8" stroke-width="1" fill="none"/><path d="M17 23.2 C19 25.2 21 19.2 23 21.7 S25 22.2 26.5 20.2" stroke="#69b0c8" stroke-width="1" fill="none"/></svg>
<div style="left:7px;top:627px;width:29.5px;height:29px;background:#3e3e3e;box-shadow:inset 0 0 0 1px #353535;"></div>
<div style="left:19.5px;top:640.5px;width:0;height:0;border-left:2.5px solid transparent;border-right:2.5px solid transparent;border-top:3px solid #c8c8c8;"></div>
<svg style="left:5px;top:855px" width="35" height="31" viewBox="0 0 35 31"><path d="M1 9.5 L14.5 1 L17.5 4 L20.5 1 L33.8 9.5 L33.8 30 L26.5 30 L26.5 16 L17.5 27 L8.5 16 L8.5 30 L1 30 Z" fill="#169aa0"/><path d="M1 9.5 L8.5 12.5 L8.5 30 L1 30 Z" fill="#2fd6d6"/><path d="M1 9.5 L14.5 1 L17.5 4 L8.5 12.5 Z" fill="#22b4b8"/><path d="M33.8 9.5 L26.5 12.5 L26.5 30 L33.8 30 Z" fill="#1a9ea4"/><path d="M33.8 9.5 L20.5 1 L17.5 4 L26.5 12.5 Z" fill="#138088"/><path d="M17.5 4 L8.5 12.5 L12 20 L17.5 12 L23 20 L26.5 12.5 Z" fill="#0d5d66"/><path d="M17.5 12 L11.5 20.5 L17.5 27.5 L23.5 20.5 Z" fill="#1fb0b0"/></svg>
<svg style="left:52px;top:840px" width="36" height="32" viewBox="0 0 36 32"><path d="M19.2 22 V8.5" stroke="#2fc04a" stroke-width="1.5"/><path d="M19.2 22 L6.5 26" stroke="#2a2ab8" stroke-width="1.5"/><path d="M19.2 22 L24 24.2" stroke="#c83030" stroke-width="1.3"/></svg>
<span style="left:68.8px;top:835.85px;font-size:8.5px;color:#3fd05a;font-weight:bold;">y</span>
<span style="left:54.8px;top:852.55px;font-size:8.5px;color:#3030c8;font-weight:bold;">z</span>
<span style="left:76.3px;top:858.25px;font-size:8.5px;color:#e03030;font-weight:bold;">x</span>
<svg style="left:1729.5px;top:902.2px" width="17" height="13.2" viewBox="0 0 17 13.2"><rect x="0.3" y="0" width="1.8" height="13.2" fill="#cfcfcf"/><path d="M3 6.6 L9.5 0 L9.5 13.2 Z" fill="#cfcfcf"/><path d="M9.8 6.6 L16.3 0 L16.3 13.2 Z" fill="#cfcfcf"/></svg>
<svg style="left:1754.5px;top:902.2px" width="13" height="13.2" viewBox="0 0 13 13.2"><rect x="0.3" y="0" width="1.8" height="13.2" fill="#cfcfcf"/><path d="M3.2 6.6 L12.4 0 L12.4 13.2 Z" fill="#cfcfcf"/></svg>
<svg style="left:1776.5px;top:902.2px" width="15" height="15.2" viewBox="0 0 15 15.2"><rect x="0.3" y="0" width="2.4" height="13.2" fill="#e8853a"/><rect x="0.5" y="13.4" width="2" height="1.6" fill="#e8853a"/><path d="M4.5 6.6 L14 0 L14 13.2 Z" fill="#cfcfcf"/></svg>
<svg style="left:1800.5px;top:902.2px" width="13" height="13.2" viewBox="0 0 13 13.2"><path d="M0.2 6.6 L12.2 0 L12.2 13.2 Z" fill="#cfcfcf"/></svg>
<svg style="left:1824px;top:902.2px" width="13" height="13.2" viewBox="0 0 13 13.2"><path d="M12.5 6.6 L0.3 0 L0.3 13.2 Z" fill="#cfcfcf"/></svg>
<svg style="left:1846.3px;top:902.2px" width="15" height="15.2" viewBox="0 0 15 15.2"><path d="M9.8 6.6 L0.3 0 L0.3 13.2 Z" fill="#cfcfcf"/><rect x="11.6" y="0" width="2.4" height="13.2" fill="#e8853a"/><rect x="11.8" y="13.4" width="2" height="1.6" fill="#e8853a"/></svg>
<svg style="left:1869.8px;top:902.2px" width="13" height="13.2" viewBox="0 0 13 13.2"><path d="M9.5 6.6 L0.3 0 L0.3 13.2 Z" fill="#cfcfcf"/><rect x="10.6" y="0" width="1.8" height="13.2" fill="#cfcfcf"/></svg>
<svg style="left:1890.5px;top:902.2px" width="17.5" height="13.2" viewBox="0 0 17.5 13.2"><path d="M6.8 6.6 L0.3 0 L0.3 13.2 Z" fill="#cfcfcf"/><path d="M13.5 6.6 L7 0 L7 13.2 Z" fill="#cfcfcf"/><rect x="15" y="0" width="1.8" height="13.2" fill="#cfcfcf"/></svg>
<svg style="left:1606px;top:938px" width="10" height="7" viewBox="0 0 10 7"><path d="M0.5 0.8 H9.5 L5 6 Z" fill="#5a5a5a" stroke="#a8a8a8" stroke-width="0.9"/></svg>
<svg style="left:1735.5px;top:938px" width="10" height="7" viewBox="0 0 10 7"><path d="M0.5 0.8 H9.5 L5 6 Z" fill="#5a5a5a" stroke="#a8a8a8" stroke-width="0.9"/></svg>
<svg style="left:1861px;top:933px" width="18" height="18" viewBox="0 0 18 18"><path d="M3.5 5.5 A7 7 0 0 1 15.5 6.5 M14.8 12.5 A7 7 0 0 1 2.8 11.8" fill="none" stroke="#d4d4d4" stroke-width="1.5"/><path d="M1.3 3.6 L5.8 4.2 L3.2 7.6 Z M16.8 14.8 L12.4 14 L15 10.6 Z" fill="#d4d4d4"/><path d="M9 5 V13" stroke="#e8853a" stroke-width="1.8"/><path d="M4.5 9 H7 M11 9 H13.5" stroke="#d4d4d4" stroke-width="1.3"/></svg>
<svg style="left:1888.5px;top:931px" width="23" height="21" viewBox="0 0 23 21"><circle cx="5.5" cy="6" r="2.7" fill="none" stroke="#c4c4c4" stroke-width="1.5"/><path d="M5.5 1.5 V3 M5.5 9 V10.5 M1 6 H2.5 M8.5 6 H10 M2.3 2.8 L3.4 3.9 M7.6 8.1 L8.7 9.2 M2.3 9.2 L3.4 8.1 M7.6 3.9 L8.7 2.8" stroke="#c4c4c4" stroke-width="1.2"/><circle cx="16.5" cy="5.2" r="2" fill="#e8853a"/><path d="M15.5 8 L12 10.5 L14.5 13 M15.5 8 L19.5 10.5 L21.5 8.5 M15.5 8 L14.5 13 L17.5 15.5 L16.5 19.5 M14.5 13 L11 15.5 L8.5 14.5" fill="none" stroke="#e8853a" stroke-width="2"/></svg>
<svg style="left:1893px;top:966px" width="18.5" height="18.5" viewBox="0 0 18.5 18.5"><rect x="0.5" y="3" width="17.5" height="15" fill="#d6d6d6"/><path d="M0.5 1 H18" stroke="#d6d6d6" stroke-width="1.4" stroke-dasharray="1.6 1"/></svg>
<span style="left:1896px;top:969.83px;font-size:10px;color:#333;letter-spacing:0.458px;font-weight:bold;">{;}</span>
<div style="left:1631px;top:40px;width:289px;height:863.3px;background:#444444;"></div>
<div style="left:1631px;top:893px;width:289px;height:10.3px;background:#4a4a4a;"></div>
<div style="left:1631px;top:40px;width:289px;height:30px;background:#ffffff;"></div>
<span style="left:1660.5px;top:46.64px;font-size:12px;color:#7d7d7d;letter-spacing:0.184px;">Outliner</span>
<div style="left:1819px;top:54px;width:12px;height:1px;background:#8a8a8a;"></div>
<div style="left:1865px;top:49px;width:10px;height:10px;background:transparent;box-sizing:border-box;border:1px solid #8a8a8a;"></div>
<span style="left:1640.8px;top:73.02px;font-size:11.5px;color:#dcdcdc;letter-spacing:0.040px;">Display</span>
<span style="left:1692.5px;top:73.02px;font-size:11.5px;color:#dcdcdc;letter-spacing:0.305px;">Show</span>
<span style="left:1736.5px;top:73.02px;font-size:11.5px;color:#dcdcdc;letter-spacing:0.211px;">Help</span>
<div style="left:1660px;top:93.3px;width:260px;height:17.7px;background:#2b2b2b;"></div>
<div style="left:1634px;top:118px;width:286px;height:762.5px;background:#2b2b2b;"></div>
<span style="left:1697.3px;top:120.82px;font-size:11.5px;color:#787878;letter-spacing:0.084px;">persp</span>
<span style="left:1697.3px;top:140.82px;font-size:11.5px;color:#787878;letter-spacing:0.733px;">top</span>
<span style="left:1697.3px;top:160.82px;font-size:11.5px;color:#787878;letter-spacing:0.557px;">front</span>
<span style="left:1697.3px;top:180.82px;font-size:11.5px;color:#787878;letter-spacing:-0.127px;">side</span>
<span style="left:1696.8px;top:201.02px;font-size:11.5px;color:#e2e2e2;letter-spacing:-0.303px;">Racing_Sail_Boat_White_ncl1_1</span>
<span style="left:1717.2px;top:220.82px;font-size:11.5px;color:#e2e2e2;letter-spacing:-0.184px;">Wind_R</span>
<span style="left:1717.2px;top:240.82px;font-size:11.5px;color:#e2e2e2;letter-spacing:-0.180px;">Body</span>
<span style="left:1717.2px;top:260.82px;font-size:11.5px;color:#e2e2e2;letter-spacing:-0.330px;">Wheel_R</span>
<span style="left:1717.2px;top:280.82px;font-size:11.5px;color:#e2e2e2;letter-spacing:-0.078px;">Wires</span>
<span style="left:1717.2px;top:300.82px;font-size:11.5px;color:#e2e2e2;letter-spacing:-0.167px;">Sail_Main</span>
<span style="left:1717.2px;top:320.82px;font-size:11.5px;color:#e2e2e2;letter-spacing:-0.350px;">Handle_RR</span>
<span style="left:1717.2px;top:340.82px;font-size:11.5px;color:#e2e2e2;letter-spacing:-0.297px;">Handle_FR</span>
<span style="left:1717.2px;top:361.16px;font-size:10.5px;color:#e2e2e2;letter-spacing:0.021px;">Sail_Rear</span>
<span style="left:1717.2px;top:380.82px;font-size:11.5px;color:#e2e2e2;letter-spacing:-0.356px;">Wheel_L</span>
<span style="left:1717.2px;top:400.82px;font-size:11.5px;color:#e2e2e2;letter-spacing:-0.372px;">Handle_RL</span>
<span style="left:1717.2px;top:420.82px;font-size:11.5px;color:#e2e2e2;letter-spacing:-0.330px;">Handle_FL</span>
<span style="left:1717.2px;top:440.82px;font-size:11.5px;color:#e2e2e2;letter-spacing:-0.083px;">Wind_L</span>
<span style="left:1717.2px;top:460.82px;font-size:11.5px;color:#e2e2e2;letter-spacing:-0.132px;">Sail_Front</span>
<span style="left:1697px;top:481.02px;font-size:11.5px;color:#e2e2e2;letter-spacing:0.184px;">defaultLightSet</span>
<span style="left:1697px;top:501.02px;font-size:11.5px;color:#e2e2e2;letter-spacing:0.154px;">defaultObjectSet</span>
<div style="left:1647px;top:882.5px;width:264px;height:10px;background:#5d5d5d;border-radius:5px;"></div>
<svg style="left:1638px;top:47.5px" width="17.5" height="15.5" viewBox="0 0 17.5 15.5"><path d="M1 5 L8.7 0.8 L16.5 5 L16.5 14.5 L1 14.5 Z" fill="#1d9da4"/><path d="M1 5 L8.7 0.8 L8.7 9 L4.5 7 Z" fill="#3fc9cb"/><path d="M16.5 5 L8.7 0.8 L8.7 9 L13 7 Z" fill="#14757c"/><path d="M4.5 7 L8.7 9 L13 7 L13 14.5 L4.5 14.5 Z" fill="#0f5a62"/><path d="M1 12 H16.5 V14.5 H1 Z" fill="#4ed3d3" opacity="0.7"/></svg>
<svg style="left:1910px;top:48px" width="12" height="12" viewBox="0 0 12 12"><path d="M1.5 1 L12 11.5 M12 1 L1.5 11.5" stroke="#8a8a8a" stroke-width="1"/></svg>
<svg style="left:1638px;top:95.5px" width="17" height="17" viewBox="0 0 17 17"><path d="M1.5 5 V1.5 H11 M8.5 0 L11.5 1.7 L8.5 3.4 M15 11.5 V15.5 H5.5 M8 13.8 L5 15.5 L8 17" fill="none" stroke="#5e5e5e" stroke-width="1.3"/><path d="M1.5 9 V15.5 M15 1.5 V8" stroke="#5e5e5e" stroke-width="1.3" stroke-dasharray="2 1.5"/></svg>
<svg style="left:1678px;top:124px" width="16" height="10" viewBox="0 0 16 10"><rect x="0.7" y="1.6" width="9.3" height="7" rx="0.6" fill="#c6c6c6"/><path d="M10.8 5 L14.6 1.4 L14.6 8.8 Z" fill="#c6c6c6"/></svg>
<svg style="left:1678px;top:144px" width="16" height="10" viewBox="0 0 16 10"><rect x="0.7" y="1.6" width="9.3" height="7" rx="0.6" fill="#c6c6c6"/><path d="M10.8 5 L14.6 1.4 L14.6 8.8 Z" fill="#c6c6c6"/></svg>
<svg style="left:1678px;top:164px" width="16" height="10" viewBox="0 0 16 10"><rect x="0.7" y="1.6" width="9.3" height="7" rx="0.6" fill="#c6c6c6"/><path d="M10.8 5 L14.6 1.4 L14.6 8.8 Z" fill="#c6c6c6"/></svg>
<svg style="left:1678px;top:184px" width="16" height="10" viewBox="0 0 16 10"><rect x="0.7" y="1.6" width="9.3" height="7" rx="0.6" fill="#c6c6c6"/><path d="M10.8 5 L14.6 1.4 L14.6 8.8 Z" fill="#c6c6c6"/></svg>
<svg style="left:1652.5px;top:201.5px" width="15" height="15" viewBox="0 0 15 15"><rect x="0.8" y="0.8" width="13.4" height="13.4" fill="none" stroke="#cfcfcf" stroke-width="1.1"/><path d="M3.6 7.5 H11.4" stroke="#dcdcdc" stroke-width="1.5"/></svg>
<svg style="left:1679px;top:201px" width="15" height="17" viewBox="0 0 15 17"><path d="M7.5 0.5 V16 M1 4.3 L14 12.3 M14 4.3 L1 12.3" stroke="#b9b3ec" stroke-width="2"/></svg>
<div style="left:1657.8px;top:216px;width:1.1px;height:253.5px;background:#c8c8c8;"></div>
<div style="left:1658px;top:229px;width:17.5px;height:1.1px;background:#c8c8c8;"></div>
<svg style="left:1675px;top:226px" width="7" height="7" viewBox="0 0 7 7"><circle cx="3.4" cy="3.5" r="2.2" fill="#2b2b2b" stroke="#c8c8c8" stroke-width="1"/></svg>
<svg style="left:1697px;top:222px" width="18" height="14" viewBox="0 0 18 14"><path d="M8 0.8 L16.8 6.2 L9.5 12.6 L1 6 Z" fill="#d8d8d8"/><path d="M8 0.8 L9.5 12.6 M1 6 L16.8 6.2 M4.5 3.3 L13.2 9.4 M12.4 3.5 L5.2 9.2" stroke="#3a3a3a" stroke-width="0.9" fill="none"/><path d="M1 6 L9.5 12.6 L16.8 6.2" fill="none" stroke="#777" stroke-width="1.2"/></svg>
<div style="left:1658px;top:249px;width:17.5px;height:1.1px;background:#c8c8c8;"></div>
<svg style="left:1675px;top:246px" width="7" height="7" viewBox="0 0 7 7"><circle cx="3.4" cy="3.5" r="2.2" fill="#2b2b2b" stroke="#c8c8c8" stroke-width="1"/></svg>
<svg style="left:1697px;top:242px" width="18" height="14" viewBox="0 0 18 14"><path d="M8 0.8 L16.8 6.2 L9.5 12.6 L1 6 Z" fill="#d8d8d8"/><path d="M8 0.8 L9.5 12.6 M1 6 L16.8 6.2 M4.5 3.3 L13.2 9.4 M12.4 3.5 L5.2 9.2" stroke="#3a3a3a" stroke-width="0.9" fill="none"/><path d="M1 6 L9.5 12.6 L16.8 6.2" fill="none" stroke="#777" stroke-width="1.2"/></svg>
<div style="left:1658px;top:269px;width:17.5px;height:1.1px;background:#c8c8c8;"></div>
<svg style="left:1675px;top:266px" width="7" height="7" viewBox="0 0 7 7"><circle cx="3.4" cy="3.5" r="2.2" fill="#2b2b2b" stroke="#c8c8c8" stroke-width="1"/></svg>
<svg style="left:1697px;top:262px" width="18" height="14" viewBox="0 0 18 14"><path d="M8 0.8 L16.8 6.2 L9.5 12.6 L1 6 Z" fill="#d8d8d8"/><path d="M8 0.8 L9.5 12.6 M1 6 L16.8 6.2 M4.5 3.3 L13.2 9.4 M12.4 3.5 L5.2 9.2" stroke="#3a3a3a" stroke-width="0.9" fill="none"/><path d="M1 6 L9.5 12.6 L16.8 6.2" fill="none" stroke="#777" stroke-width="1.2"/></svg>
<div style="left:1658px;top:289px;width:17.5px;height:1.1px;background:#c8c8c8;"></div>
<svg style="left:1675px;top:286px" width="7" height="7" viewBox="0 0 7 7"><circle cx="3.4" cy="3.5" r="2.2" fill="#2b2b2b" stroke="#c8c8c8" stroke-width="1"/></svg>
<svg style="left:1697px;top:282px" width="18" height="14" viewBox="0 0 18 14"><path d="M8 0.8 L16.8 6.2 L9.5 12.6 L1 6 Z" fill="#d8d8d8"/><path d="M8 0.8 L9.5 12.6 M1 6 L16.8 6.2 M4.5 3.3 L13.2 9.4 M12.4 3.5 L5.2 9.2" stroke="#3a3a3a" stroke-width="0.9" fill="none"/><path d="M1 6 L9.5 12.6 L16.8 6.2" fill="none" stroke="#777" stroke-width="1.2"/></svg>
<div style="left:1658px;top:309px;width:17.5px;height:1.1px;background:#c8c8c8;"></div>
<svg style="left:1675px;top:306px" width="7" height="7" viewBox="0 0 7 7"><circle cx="3.4" cy="3.5" r="2.2" fill="#2b2b2b" stroke="#c8c8c8" stroke-width="1"/></svg>
<svg style="left:1697px;top:302px" width="18" height="14" viewBox="0 0 18 14"><path d="M8 0.8 L16.8 6.2 L9.5 12.6 L1 6 Z" fill="#d8d8d8"/><path d="M8 0.8 L9.5 12.6 M1 6 L16.8 6.2 M4.5 3.3 L13.2 9.4 M12.4 3.5 L5.2 9.2" stroke="#3a3a3a" stroke-width="0.9" fill="none"/><path d="M1 6 L9.5 12.6 L16.8 6.2" fill="none" stroke="#777" stroke-width="1.2"/></svg>
<div style="left:1658px;top:329px;width:17.5px;height:1.1px;background:#c8c8c8;"></div>
<svg style="left:1675px;top:326px" width="7" height="7" viewBox="0 0 7 7"><circle cx="3.4" cy="3.5" r="2.2" fill="#2b2b2b" stroke="#c8c8c8" stroke-width="1"/></svg>
<svg style="left:1697px;top:322px" width="18" height="14" viewBox="0 0 18 14"><path d="M8 0.8 L16.8 6.2 L9.5 12.6 L1 6 Z" fill="#d8d8d8"/><path d="M8 0.8 L9.5 12.6 M1 6 L16.8 6.2 M4.5 3.3 L13.2 9.4 M12.4 3.5 L5.2 9.2" stroke="#3a3a3a" stroke-width="0.9" fill="none"/><path d="M1 6 L9.5 12.6 L16.8 6.2" fill="none" stroke="#777" stroke-width="1.2"/></svg>
<div style="left:1658px;top:349px;width:17.5px;height:1.1px;background:#c8c8c8;"></div>
<svg style="left:1675px;top:346px" width="7" height="7" viewBox="0 0 7 7"><circle cx="3.4" cy="3.5" r="2.2" fill="#2b2b2b" stroke="#c8c8c8" stroke-width="1"/></svg>
<svg style="left:1697px;top:342px" width="18" height="14" viewBox="0 0 18 14"><path d="M8 0.8 L16.8 6.2 L9.5 12.6 L1 6 Z" fill="#d8d8d8"/><path d="M8 0.8 L9.5 12.6 M1 6 L16.8 6.2 M4.5 3.3 L13.2 9.4 M12.4 3.5 L5.2 9.2" stroke="#3a3a3a" stroke-width="0.9" fill="none"/><path d="M1 6 L9.5 12.6 L16.8 6.2" fill="none" stroke="#777" stroke-width="1.2"/></svg>
<div style="left:1658px;top:369px;width:17.5px;height:1.1px;background:#c8c8c8;"></div>
<svg style="left:1675px;top:366px" width="7" height="7" viewBox="0 0 7 7"><circle cx="3.4" cy="3.5" r="2.2" fill="#2b2b2b" stroke="#c8c8c8" stroke-width="1"/></svg>
<svg style="left:1697px;top:362px" width="18" height="14" viewBox="0 0 18 14"><path d="M8 0.8 L16.8 6.2 L9.5 12.6 L1 6 Z" fill="#d8d8d8"/><path d="M8 0.8 L9.5 12.6 M1 6 L16.8 6.2 M4.5 3.3 L13.2 9.4 M12.4 3.5 L5.2 9.2" stroke="#3a3a3a" stroke-width="0.9" fill="none"/><path d="M1 6 L9.5 12.6 L16.8 6.2" fill="none" stroke="#777" stroke-width="1.2"/></svg>
<div style="left:1658px;top:389px;width:17.5px;height:1.1px;background:#c8c8c8;"></div>
<svg style="left:1675px;top:386px" width="7" height="7" viewBox="0 0 7 7"><circle cx="3.4" cy="3.5" r="2.2" fill="#2b2b2b" stroke="#c8c8c8" stroke-width="1"/></svg>
<svg style="left:1697px;top:382px" width="18" height="14" viewBox="0 0 18 14"><path d="M8 0.8 L16.8 6.2 L9.5 12.6 L1 6 Z" fill="#d8d8d8"/><path d="M8 0.8 L9.5 12.6 M1 6 L16.8 6.2 M4.5 3.3 L13.2 9.4 M12.4 3.5 L5.2 9.2" stroke="#3a3a3a" stroke-width="0.9" fill="none"/><path d="M1 6 L9.5 12.6 L16.8 6.2" fill="none" stroke="#777" stroke-width="1.2"/></svg>
<div style="left:1658px;top:409px;width:17.5px;height:1.1px;background:#c8c8c8;"></div>
<svg style="left:1675px;top:406px" width="7" height="7" viewBox="0 0 7 7"><circle cx="3.4" cy="3.5" r="2.2" fill="#2b2b2b" stroke="#c8c8c8" stroke-width="1"/></svg>
<svg style="left:1697px;top:402px" width="18" height="14" viewBox="0 0 18 14"><path d="M8 0.8 L16.8 6.2 L9.5 12.6 L1 6 Z" fill="#d8d8d8"/><path d="M8 0.8 L9.5 12.6 M1 6 L16.8 6.2 M4.5 3.3 L13.2 9.4 M12.4 3.5 L5.2 9.2" stroke="#3a3a3a" stroke-width="0.9" fill="none"/><path d="M1 6 L9.5 12.6 L16.8 6.2" fill="none" stroke="#777" stroke-width="1.2"/></svg>
<div style="left:1658px;top:429px;width:17.5px;height:1.1px;background:#c8c8c8;"></div>
<svg style="left:1675px;top:426px" width="7" height="7" viewBox="0 0 7 7"><circle cx="3.4" cy="3.5" r="2.2" fill="#2b2b2b" stroke="#c8c8c8" stroke-width="1"/></svg>
<svg style="left:1697px;top:422px" width="18" height="14" viewBox="0 0 18 14"><path d="M8 0.8 L16.8 6.2 L9.5 12.6 L1 6 Z" fill="#d8d8d8"/><path d="M8 0.8 L9.5 12.6 M1 6 L16.8 6.2 M4.5 3.3 L13.2 9.4 M12.4 3.5 L5.2 9.2" stroke="#3a3a3a" stroke-width="0.9" fill="none"/><path d="M1 6 L9.5 12.6 L16.8 6.2" fill="none" stroke="#777" stroke-width="1.2"/></svg>
<div style="left:1658px;top:449px;width:17.5px;height:1.1px;background:#c8c8c8;"></div>
<svg style="left:1675px;top:446px" width="7" height="7" viewBox="0 0 7 7"><circle cx="3.4" cy="3.5" r="2.2" fill="#2b2b2b" stroke="#c8c8c8" stroke-width="1"/></svg>
<svg style="left:1697px;top:442px" width="18" height="14" viewBox="0 0 18 14"><path d="M8 0.8 L16.8 6.2 L9.5 12.6 L1 6 Z" fill="#d8d8d8"/><path d="M8 0.8 L9.5 12.6 M1 6 L16.8 6.2 M4.5 3.3 L13.2 9.4 M12.4 3.5 L5.2 9.2" stroke="#3a3a3a" stroke-width="0.9" fill="none"/><path d="M1 6 L9.5 12.6 L16.8 6.2" fill="none" stroke="#777" stroke-width="1.2"/></svg>
<div style="left:1658px;top:469px;width:17.5px;height:1.1px;background:#c8c8c8;"></div>
<svg style="left:1675px;top:466px" width="7" height="7" viewBox="0 0 7 7"><circle cx="3.4" cy="3.5" r="2.2" fill="#2b2b2b" stroke="#c8c8c8" stroke-width="1"/></svg>
<svg style="left:1697px;top:462px" width="18" height="14" viewBox="0 0 18 14"><path d="M8 0.8 L16.8 6.2 L9.5 12.6 L1 6 Z" fill="#d8d8d8"/><path d="M8 0.8 L9.5 12.6 M1 6 L16.8 6.2 M4.5 3.3 L13.2 9.4 M12.4 3.5 L5.2 9.2" stroke="#3a3a3a" stroke-width="0.9" fill="none"/><path d="M1 6 L9.5 12.6 L16.8 6.2" fill="none" stroke="#777" stroke-width="1.2"/></svg>
<svg style="left:1677.5px;top:480.5px" width="17" height="17" viewBox="0 0 17 17"><defs><radialGradient id="sg489" cx="0.62" cy="0.38" r="0.7"><stop offset="0" stop-color="#8fb0e8"/><stop offset="0.45" stop-color="#4a64b0"/><stop offset="1" stop-color="#1c2450"/></radialGradient></defs><circle cx="8.5" cy="8.5" r="7.6" fill="url(#sg489)" stroke="#d8d2a8" stroke-width="1.3"/><path d="M4 12 C6 8 9 5.5 13 4.5" stroke="#d8e0c0" stroke-width="1.6" fill="none"/></svg>
<svg style="left:1677.5px;top:500.5px" width="17" height="17" viewBox="0 0 17 17"><defs><radialGradient id="sg509" cx="0.62" cy="0.38" r="0.7"><stop offset="0" stop-color="#8fb0e8"/><stop offset="0.45" stop-color="#4a64b0"/><stop offset="1" stop-color="#1c2450"/></radialGradient></defs><circle cx="8.5" cy="8.5" r="7.6" fill="url(#sg509)" stroke="#d8d2a8" stroke-width="1.3"/><path d="M4 12 C6 8 9 5.5 13 4.5" stroke="#d8e0c0" stroke-width="1.6" fill="none"/></svg>
<div style="left:1636px;top:883.5px;width:0;height:0;border-top:4.5px solid transparent;border-bottom:4.5px solid transparent;border-right:6px solid #d0d0d0;"></div>
<div style="left:1914px;top:883.5px;width:0;height:0;border-top:4.5px solid transparent;border-bottom:4.5px solid transparent;border-left:6px solid #d0d0d0;"></div>
</body></html>
